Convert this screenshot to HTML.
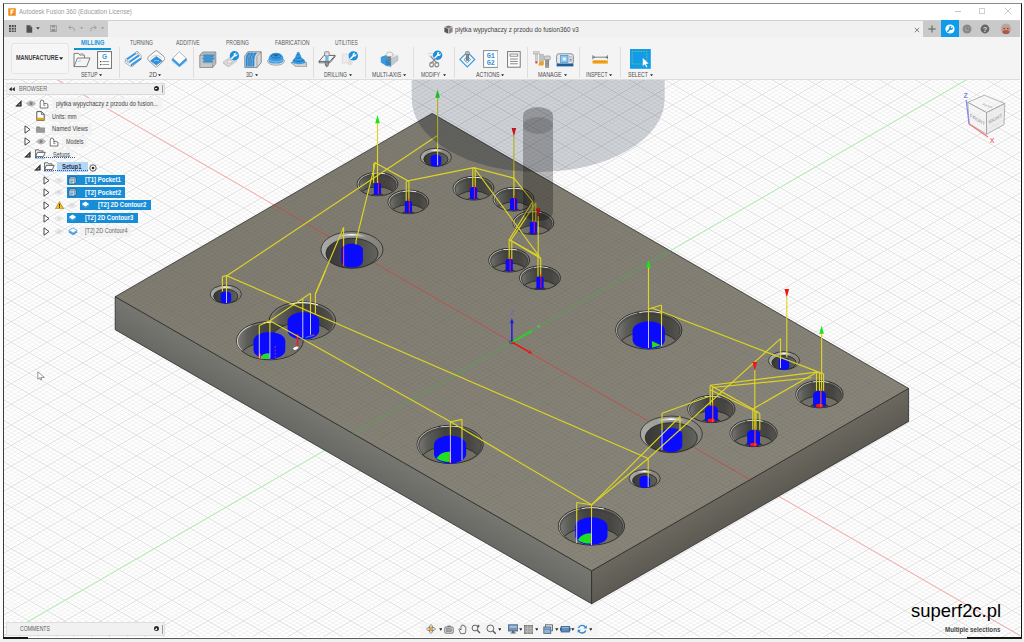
<!DOCTYPE html>
<html><head><meta charset="utf-8"><title>Autodesk Fusion 360</title>
<style>
*{box-sizing:border-box;margin:0;padding:0}
html,body{width:1024px;height:642px;overflow:hidden;background:#fbfbfb;font-family:"Liberation Sans",sans-serif;}
#shadow{position:absolute;left:0;top:639px;width:1024px;height:3px;background:#f0f0f0}
#win{position:absolute;left:3px;top:3px;width:1019px;height:636px;background:#fff;border:1px solid #3a3a3a;border-top-color:#8a8a8a;border-left-color:#3c3c3c;border-right:1.5px solid #141414;border-bottom:1.6px solid #5a5a5a}
#cv{position:absolute;left:0;top:0}
.abs{position:absolute}
#title{position:absolute;left:4px;top:4px;width:1016px;height:16px;background:#fff}
#title .t{position:absolute;left:14.5px;top:3.2px;font-size:8.3px;color:#8d8d8d;white-space:nowrap;letter-spacing:-.05px}
#qat{position:absolute;left:4px;top:20px;width:1016px;height:17px;background:#f1f1f1;border-top:1px solid #cfcfcf}
#qatl{position:absolute;left:0;top:0;width:104px;height:16px;background:#cdcdcd}
#qatr{position:absolute;left:919px;top:0;width:97px;height:16px;background:#c9c9c9}
#ribbon{position:absolute;left:4px;top:37px;width:1016px;height:43px;background:#f4f4f4;border-bottom:1px solid #dcdcdc}
.tab{position:absolute;top:39.3px;font-size:6.4px;color:#555;white-space:nowrap;letter-spacing:-.1px}
.lab{position:absolute;top:71.6px;font-size:6.1px;color:#4a4a4a;white-space:nowrap;transform:translateX(-50%);letter-spacing:-.1px}
.lab i{font-style:normal;font-size:4.6px;position:relative;top:-.6px;margin-left:1.6px;color:#333}
.sep{position:absolute;top:47px;width:1px;height:31px;background:#dedede}
.row{position:absolute;height:11px;font-size:6.2px;color:#3c3c3c;white-space:nowrap;line-height:11px}
.lbl{position:absolute;height:11px;line-height:11px;background:rgba(240,240,240,.92);padding:0 3px}
.sel{position:absolute;height:11px;line-height:11px;background:#1689d3;color:#fff;font-weight:bold}
.tri{position:absolute;width:0;height:0}
</style></head><body>
<div id="shadow"></div>
<div id="win"></div><div class="abs" style="left:3px;top:637.4px;width:25px;height:1.6px;background:#161616"></div><div class="abs" style="left:967px;top:637.4px;width:54.5px;height:1.6px;background:#161616"></div>
<svg id="cv" width="1024" height="642" viewBox="0 0 1024 642">
<defs>
<clipPath id="vp"><rect x="4" y="80" width="1016.5" height="557"/></clipPath>
<linearGradient id="gCh" x1="0" y1="0" x2="1" y2="1"><stop offset="0" stop-color="#c9c9c7"/><stop offset=".38" stop-color="#f2f2f0"/><stop offset=".62" stop-color="#9a9994"/><stop offset="1" stop-color="#7d7b72"/></linearGradient>
<linearGradient id="gWall" x1="0" y1="0" x2="1" y2="0"><stop offset="0" stop-color="#787874"/><stop offset=".14" stop-color="#5c5c58"/><stop offset=".42" stop-color="#42423f"/><stop offset=".8" stop-color="#464542"/><stop offset="1" stop-color="#565551"/></linearGradient>
<linearGradient id="gCs" x1="0" y1="0" x2="1" y2="0"><stop offset="0" stop-color="#aaaaa7"/><stop offset=".3" stop-color="#9c9c98"/><stop offset=".7" stop-color="#8b8a84"/><stop offset="1" stop-color="#838178"/></linearGradient>
<linearGradient id="gHi" x1="0" y1="0" x2="1" y2="0"><stop offset=".15" stop-color="#fff" stop-opacity="0"/><stop offset=".5" stop-color="#fff" stop-opacity="1"/><stop offset=".85" stop-color="#fff" stop-opacity="0"/></linearGradient>
<linearGradient id="gBore" x1="0" y1="0" x2="1" y2="0"><stop offset="0" stop-color="#383836"/><stop offset=".45" stop-color="#464644"/><stop offset=".8" stop-color="#585855"/><stop offset="1" stop-color="#62625f"/></linearGradient>
<linearGradient id="gTop" gradientUnits="userSpaceOnUse" x1="432" y1="113" x2="592" y2="571"><stop offset="0" stop-color="#7f7c71"/><stop offset="1" stop-color="#8a867b"/></linearGradient><linearGradient id="gLf" gradientUnits="userSpaceOnUse" x1="115.2" y1="296.7" x2="100.9" y2="321.5"><stop offset="0" stop-color="#777772"/><stop offset="1" stop-color="#686864"/></linearGradient><linearGradient id="gRt" gradientUnits="userSpaceOnUse" x1="591.6" y1="570.8" x2="605.9" y2="595.6"><stop offset="0" stop-color="#6b685f"/><stop offset="1" stop-color="#5c5a52"/></linearGradient>
<clipPath id="topc"><polygon points="432.2,113.4 115.2,296.7 591.6,570.8 908.6,388.4"/></clipPath>
</defs>
<g clip-path="url(#vp)">
<rect x="0" y="78" width="1024" height="564" fill="#fff"/>
<defs><path id="gmin" d="M-968.4 78L5 640M-961.3 78L12.1 640M-954.1 78L19.3 640M-939.8 78L33.6 640M-932.7 78L40.7 640M-925.5 78L47.9 640M-918.4 78L55 640M-904.1 78L69.3 640M11.5 78L-961.9 640M-896.9 78L76.5 640M18.6 78L-954.8 640M-889.8 78L83.6 640M25.8 78L-947.6 640M-882.6 78L90.8 640M32.9 78L-940.5 640M-868.3 78L105.1 640M47.2 78L-926.2 640M-861.2 78L112.2 640M54.4 78L-919 640M-854 78L119.4 640M61.5 78L-911.9 640M-846.9 78L126.5 640M68.7 78L-904.7 640M-832.6 78L140.8 640M83 78L-890.4 640M-825.4 78L148 640M90.1 78L-883.3 640M-818.3 78L155.1 640M97.3 78L-876.1 640M-811.1 78L162.3 640M104.4 78L-869 640M-796.8 78L176.6 640M118.7 78L-854.7 640M-789.7 78L183.7 640M125.9 78L-847.5 640M-782.5 78L190.9 640M133 78L-840.4 640M-775.4 78L198 640M140.2 78L-833.2 640M-761.1 78L212.3 640M154.5 78L-818.9 640M-753.9 78L219.5 640M161.6 78L-811.8 640M-746.8 78L226.6 640M168.8 78L-804.6 640M-739.6 78L233.8 640M175.9 78L-797.5 640M-725.3 78L248.1 640M190.2 78L-783.2 640M-718.2 78L255.2 640M197.4 78L-776 640M-711 78L262.4 640M204.5 78L-768.9 640M-703.9 78L269.5 640M211.7 78L-761.7 640M-689.6 78L283.8 640M226 78L-747.4 640M-682.4 78L291 640M233.1 78L-740.3 640M-675.3 78L298.1 640M240.3 78L-733.1 640M-668.1 78L305.3 640M247.4 78L-726 640M-653.8 78L319.6 640M261.7 78L-711.7 640M-646.7 78L326.7 640M268.9 78L-704.5 640M-639.5 78L333.9 640M276 78L-697.4 640M-632.4 78L341 640M283.2 78L-690.2 640M-618.1 78L355.3 640M297.5 78L-675.9 640M-610.9 78L362.5 640M304.6 78L-668.8 640M-603.8 78L369.6 640M311.8 78L-661.6 640M-596.6 78L376.8 640M318.9 78L-654.5 640M-582.3 78L391.1 640M333.2 78L-640.2 640M-575.2 78L398.2 640M340.4 78L-633 640M-568 78L405.4 640M347.5 78L-625.9 640M-560.9 78L412.5 640M354.7 78L-618.7 640M-546.6 78L426.8 640M369 78L-604.4 640M-539.4 78L434 640M376.1 78L-597.3 640M-532.3 78L441.1 640M383.3 78L-590.1 640M-525.1 78L448.3 640M390.4 78L-583 640M-510.8 78L462.6 640M404.7 78L-568.7 640M-503.7 78L469.7 640M411.9 78L-561.5 640M-496.5 78L476.9 640M419 78L-554.4 640M-489.4 78L484 640M426.2 78L-547.2 640M-475.1 78L498.3 640M440.5 78L-532.9 640M-467.9 78L505.5 640M447.6 78L-525.8 640M-460.8 78L512.6 640M454.8 78L-518.6 640M-453.6 78L519.8 640M461.9 78L-511.5 640M-439.3 78L534.1 640M476.2 78L-497.2 640M-432.2 78L541.2 640M483.4 78L-490 640M-425 78L548.4 640M490.5 78L-482.9 640M-417.9 78L555.5 640M497.7 78L-475.7 640M-403.6 78L569.8 640M512 78L-461.4 640M-396.4 78L577 640M519.1 78L-454.3 640M-389.3 78L584.1 640M526.3 78L-447.1 640M-382.1 78L591.3 640M533.4 78L-440 640M-367.8 78L605.6 640M547.7 78L-425.7 640M-360.7 78L612.7 640M554.9 78L-418.5 640M-353.5 78L619.9 640M562 78L-411.4 640M-346.4 78L627 640M569.2 78L-404.2 640M-332.1 78L641.3 640M583.5 78L-389.9 640M-324.9 78L648.5 640M590.6 78L-382.8 640M-317.8 78L655.6 640M597.8 78L-375.6 640M-310.6 78L662.8 640M604.9 78L-368.5 640M-296.3 78L677.1 640M619.2 78L-354.2 640M-289.2 78L684.2 640M626.4 78L-347 640M-282 78L691.4 640M633.5 78L-339.9 640M-274.9 78L698.5 640M640.7 78L-332.7 640M-260.6 78L712.8 640M655 78L-318.4 640M-253.4 78L720 640M662.1 78L-311.3 640M-246.3 78L727.1 640M669.3 78L-304.1 640M-239.1 78L734.3 640M676.4 78L-297 640M-224.8 78L748.6 640M690.7 78L-282.7 640M-217.7 78L755.7 640M697.9 78L-275.5 640M-210.5 78L762.9 640M705 78L-268.4 640M-203.4 78L770 640M712.2 78L-261.2 640M-189.1 78L784.3 640M726.5 78L-246.9 640M-181.9 78L791.5 640M733.6 78L-239.8 640M-174.8 78L798.6 640M740.8 78L-232.6 640M-167.6 78L805.8 640M747.9 78L-225.5 640M-153.3 78L820.1 640M762.2 78L-211.2 640M-146.2 78L827.2 640M769.4 78L-204 640M-139 78L834.4 640M776.5 78L-196.9 640M-131.9 78L841.5 640M783.7 78L-189.7 640M-117.6 78L855.8 640M798 78L-175.4 640M-110.4 78L863 640M805.1 78L-168.3 640M-103.3 78L870.1 640M812.3 78L-161.1 640M-96.1 78L877.3 640M819.4 78L-154 640M-81.8 78L891.6 640M833.7 78L-139.7 640M-74.7 78L898.7 640M840.9 78L-132.5 640M-67.5 78L905.9 640M848 78L-125.4 640M-60.4 78L913 640M855.2 78L-118.2 640M-46.1 78L927.3 640M869.5 78L-103.9 640M-38.9 78L934.5 640M876.6 78L-96.8 640M-31.8 78L941.6 640M883.8 78L-89.6 640M-24.6 78L948.8 640M890.9 78L-82.5 640M-10.3 78L963.1 640M905.2 78L-68.2 640M-3.2 78L970.2 640M912.4 78L-61 640M4 78L977.4 640M919.5 78L-53.9 640M11.1 78L984.5 640M926.7 78L-46.7 640M25.4 78L998.8 640M941 78L-32.4 640M32.6 78L1006 640M948.1 78L-25.3 640M39.7 78L1013.1 640M955.3 78L-18.1 640M46.9 78L1020.3 640M962.4 78L-11 640M61.2 78L1034.6 640M976.7 78L3.3 640M68.3 78L1041.7 640M983.9 78L10.5 640M75.5 78L1048.9 640M991 78L17.6 640M82.6 78L1056 640M998.2 78L24.8 640M96.9 78L1070.3 640M1012.5 78L39.1 640M104.1 78L1077.5 640M1019.6 78L46.2 640M111.2 78L1084.6 640M1026.8 78L53.4 640M118.4 78L1091.8 640M1033.9 78L60.5 640M132.7 78L1106.1 640M1048.2 78L74.8 640M139.8 78L1113.2 640M1055.4 78L82 640M147 78L1120.4 640M1062.5 78L89.1 640M154.1 78L1127.5 640M1069.7 78L96.3 640M168.4 78L1141.8 640M1084 78L110.6 640M175.6 78L1149 640M1091.1 78L117.7 640M182.7 78L1156.1 640M1098.3 78L124.9 640M189.9 78L1163.3 640M1105.4 78L132 640M204.2 78L1177.6 640M1119.7 78L146.3 640M211.3 78L1184.7 640M1126.9 78L153.5 640M218.5 78L1191.9 640M1134 78L160.6 640M225.6 78L1199 640M1141.2 78L167.8 640M239.9 78L1213.3 640M1155.5 78L182.1 640M247.1 78L1220.5 640M1162.6 78L189.2 640M254.2 78L1227.6 640M1169.8 78L196.4 640M261.4 78L1234.8 640M1176.9 78L203.5 640M275.7 78L1249.1 640M1191.2 78L217.8 640M282.8 78L1256.2 640M1198.4 78L225 640M290 78L1263.4 640M1205.5 78L232.1 640M297.1 78L1270.5 640M1212.7 78L239.3 640M311.4 78L1284.8 640M1227 78L253.6 640M318.6 78L1292 640M1234.1 78L260.7 640M325.7 78L1299.1 640M1241.3 78L267.9 640M332.9 78L1306.3 640M1248.4 78L275 640M347.2 78L1320.6 640M1262.7 78L289.3 640M354.3 78L1327.7 640M1269.9 78L296.5 640M361.5 78L1334.9 640M1277 78L303.6 640M368.6 78L1342 640M1284.2 78L310.8 640M382.9 78L1356.3 640M1298.5 78L325.1 640M390.1 78L1363.5 640M1305.6 78L332.2 640M397.2 78L1370.6 640M1312.8 78L339.4 640M404.4 78L1377.8 640M1319.9 78L346.5 640M418.7 78L1392.1 640M1334.2 78L360.8 640M425.8 78L1399.2 640M1341.4 78L368 640M433 78L1406.4 640M1348.5 78L375.1 640M440.1 78L1413.5 640M1355.7 78L382.3 640M454.4 78L1427.8 640M1370 78L396.6 640M461.6 78L1435 640M1377.1 78L403.7 640M468.7 78L1442.1 640M1384.3 78L410.9 640M475.9 78L1449.3 640M1391.4 78L418 640M490.2 78L1463.6 640M1405.7 78L432.3 640M497.3 78L1470.7 640M1412.9 78L439.5 640M504.5 78L1477.9 640M1420 78L446.6 640M511.6 78L1485 640M1427.2 78L453.8 640M525.9 78L1499.3 640M1441.5 78L468.1 640M533.1 78L1506.5 640M1448.6 78L475.2 640M540.2 78L1513.6 640M1455.8 78L482.4 640M547.4 78L1520.8 640M1462.9 78L489.5 640M561.7 78L1535.1 640M1477.2 78L503.8 640M568.8 78L1542.2 640M1484.4 78L511 640M576 78L1549.4 640M1491.5 78L518.1 640M583.1 78L1556.5 640M1498.7 78L525.3 640M597.4 78L1570.8 640M1513 78L539.6 640M604.6 78L1578 640M1520.1 78L546.7 640M611.7 78L1585.1 640M1527.3 78L553.9 640M618.9 78L1592.3 640M1534.4 78L561 640M633.2 78L1606.6 640M1548.7 78L575.3 640M640.3 78L1613.7 640M1555.9 78L582.5 640M647.5 78L1620.9 640M1563 78L589.6 640M654.6 78L1628 640M1570.2 78L596.8 640M668.9 78L1642.3 640M1584.5 78L611.1 640M676.1 78L1649.5 640M1591.6 78L618.2 640M683.2 78L1656.6 640M1598.8 78L625.4 640M690.4 78L1663.8 640M1605.9 78L632.5 640M704.7 78L1678.1 640M1620.2 78L646.8 640M711.8 78L1685.2 640M1627.4 78L654 640M719 78L1692.4 640M1634.5 78L661.1 640M726.1 78L1699.5 640M1641.7 78L668.3 640M740.4 78L1713.8 640M1656 78L682.6 640M747.6 78L1721 640M1663.1 78L689.7 640M754.7 78L1728.1 640M1670.3 78L696.9 640M761.9 78L1735.3 640M1677.4 78L704 640M776.2 78L1749.6 640M1691.7 78L718.3 640M783.3 78L1756.7 640M1698.9 78L725.5 640M790.5 78L1763.9 640M1706 78L732.6 640M797.6 78L1771 640M1713.2 78L739.8 640M811.9 78L1785.3 640M1727.5 78L754.1 640M819.1 78L1792.5 640M1734.6 78L761.2 640M826.2 78L1799.6 640M1741.8 78L768.4 640M833.4 78L1806.8 640M1748.9 78L775.5 640M847.7 78L1821.1 640M1763.2 78L789.8 640M854.8 78L1828.2 640M1770.4 78L797 640M862 78L1835.4 640M1777.5 78L804.1 640M869.1 78L1842.5 640M1784.7 78L811.3 640M883.4 78L1856.8 640M1799 78L825.6 640M890.6 78L1864 640M1806.1 78L832.7 640M897.7 78L1871.1 640M1813.3 78L839.9 640M904.9 78L1878.3 640M1820.4 78L847 640M919.2 78L1892.6 640M1834.7 78L861.3 640M926.3 78L1899.7 640M1841.9 78L868.5 640M933.5 78L1906.9 640M1849 78L875.6 640M940.6 78L1914 640M1856.2 78L882.8 640M954.9 78L1928.3 640M1870.5 78L897.1 640M962.1 78L1935.5 640M1877.6 78L904.2 640M969.2 78L1942.6 640M1884.8 78L911.4 640M976.4 78L1949.8 640M1891.9 78L918.5 640M990.7 78L1964.1 640M1906.2 78L932.8 640M997.8 78L1971.2 640M1913.4 78L940 640M1005 78L1978.4 640M1920.5 78L947.1 640M1012.1 78L1985.5 640M1927.7 78L954.3 640M1942 78L968.6 640M1949.1 78L975.7 640M1956.3 78L982.9 640M1963.4 78L990 640M1977.7 78L1004.3 640M1984.9 78L1011.5 640M1992 78L1018.6 640"/><path id="gmaj" d="M-947 78L26.4 640M-911.2 78L62.2 640M4.3 78L-969.1 640M-875.5 78L97.9 640M40.1 78L-933.3 640M-839.7 78L133.7 640M75.8 78L-897.6 640M-804 78L169.4 640M111.6 78L-861.8 640M-768.2 78L205.2 640M147.3 78L-826.1 640M-732.5 78L240.9 640M183.1 78L-790.3 640M-696.7 78L276.7 640M218.8 78L-754.6 640M-661 78L312.4 640M254.6 78L-718.8 640M-625.2 78L348.2 640M290.3 78L-683.1 640M-589.5 78L383.9 640M326.1 78L-647.3 640M-553.7 78L419.7 640M361.8 78L-611.6 640M-518 78L455.4 640M397.6 78L-575.8 640M-482.2 78L491.2 640M433.3 78L-540.1 640M-446.5 78L526.9 640M469.1 78L-504.3 640M-410.7 78L562.7 640M504.8 78L-468.6 640M-375 78L598.4 640M540.6 78L-432.8 640M-339.2 78L634.2 640M576.3 78L-397.1 640M-303.5 78L669.9 640M612.1 78L-361.3 640M-267.7 78L705.7 640M647.8 78L-325.6 640M-232 78L741.4 640M683.6 78L-289.8 640M-196.2 78L777.2 640M719.3 78L-254.1 640M-160.5 78L812.9 640M755.1 78L-218.3 640M-124.7 78L848.7 640M790.8 78L-182.6 640M-89 78L884.4 640M826.6 78L-146.8 640M-53.2 78L920.2 640M862.3 78L-111.1 640M-17.5 78L955.9 640M898.1 78L-75.3 640M18.3 78L991.7 640M933.8 78L-39.6 640M54 78L1027.4 640M969.6 78L-3.8 640M89.8 78L1063.2 640M1005.3 78L31.9 640M125.5 78L1098.9 640M1041.1 78L67.7 640M161.3 78L1134.7 640M1076.8 78L103.4 640M197 78L1170.4 640M1112.6 78L139.2 640M232.8 78L1206.2 640M1148.3 78L174.9 640M268.5 78L1241.9 640M1184.1 78L210.7 640M304.3 78L1277.7 640M1219.8 78L246.4 640M340 78L1313.4 640M1255.6 78L282.2 640M375.8 78L1349.2 640M1291.3 78L317.9 640M411.5 78L1384.9 640M1327.1 78L353.7 640M447.3 78L1420.7 640M1362.8 78L389.4 640M483 78L1456.4 640M1398.6 78L425.2 640M518.8 78L1492.2 640M1434.3 78L460.9 640M554.5 78L1527.9 640M1470.1 78L496.7 640M590.3 78L1563.7 640M1505.8 78L532.4 640M626 78L1599.4 640M1541.6 78L568.2 640M661.8 78L1635.2 640M1577.3 78L603.9 640M697.5 78L1670.9 640M1613.1 78L639.7 640M733.3 78L1706.7 640M1648.8 78L675.4 640M769 78L1742.4 640M1684.6 78L711.2 640M804.8 78L1778.2 640M1720.3 78L746.9 640M840.5 78L1813.9 640M1756.1 78L782.7 640M876.3 78L1849.7 640M1791.8 78L818.4 640M912 78L1885.4 640M1827.6 78L854.2 640M947.8 78L1921.2 640M1863.3 78L889.9 640M983.5 78L1956.9 640M1899.1 78L925.7 640M1019.3 78L1992.7 640M1934.8 78L961.4 640M1970.6 78L997.2 640"/></defs>
<use href="#gmin" fill="none" stroke="#e9e9e9" stroke-width="0.6"/><use href="#gmaj" fill="none" stroke="#d8d8d8" stroke-width="0.8"/>
<line x1="-50" y1="17.8" x2="1100" y2="681.7" stroke="#f5b4b4" stroke-width="1.1" opacity="1"/>
<line x1="-50" y1="666.6" x2="1100" y2="2.7" stroke="#b6eeb6" stroke-width="1.1" opacity="1"/>
<polygon points="115.2,296.7 591.6,570.8 591.6,603.8 115.2,329.7" fill="url(#gLf)" stroke="#2b2b29" stroke-width="0.8" stroke-linejoin="round"/>
<polygon points="591.6,570.8 908.6,388.4 908.6,421.4 591.6,603.8" fill="url(#gRt)" stroke="#2b2b29" stroke-width="0.8" stroke-linejoin="round"/>
<polygon points="432.2,113.4 115.2,296.7 591.6,570.8 908.6,388.4" fill="url(#gTop)" stroke="#2b2b29" stroke-width="0.8" stroke-linejoin="round"/>
<g clip-path="url(#topc)"><use href="#gmin" fill="none" stroke="#74716a" stroke-width=".5" opacity=".4"/><use href="#gmaj" fill="none" stroke="#6c695f" stroke-width=".7" opacity=".32"/>
<line x1="-50" y1="17.8" x2="1100" y2="681.7" stroke="#c0504a" stroke-width="1.25" opacity="0.6"/>
<line x1="-50" y1="666.6" x2="1100" y2="2.7" stroke="#58a058" stroke-width="1.25" opacity="0.7"/>
</g>
<ellipse cx="435.9" cy="157.3" rx="15.6" ry="9" fill="url(#gCs)" stroke="#2a2a28" stroke-width="0.8"/><path d="M426.1 152.4A13.8 8 0 0 1 445.7 152.4" fill="none" stroke="url(#gHi)" stroke-width="1.6"/><ellipse cx="435.9" cy="159.3" rx="12.1" ry="7" fill="url(#gBore)" stroke="#242422" stroke-width="0.8"/><path d="M430.6 157.6A5.2 3 0 0 1 441.1 157.6L441.1 163.5A5.2 3 0 0 1 430.6 163.5Z" fill="#0a0aff"/><ellipse cx="225.8" cy="294.2" rx="15.6" ry="9" fill="url(#gCs)" stroke="#2a2a28" stroke-width="0.8"/><path d="M216 289.3A13.8 8 0 0 1 235.6 289.3" fill="none" stroke="url(#gHi)" stroke-width="1.6"/><ellipse cx="225.8" cy="296.2" rx="12.1" ry="7" fill="url(#gBore)" stroke="#242422" stroke-width="0.8"/><path d="M220.6 294.5A5.2 3 0 0 1 231.1 294.5L231.1 300.4A5.2 3 0 0 1 220.6 300.4Z" fill="#0a0aff"/><ellipse cx="644.7" cy="478.6" rx="15.6" ry="9" fill="url(#gCs)" stroke="#2a2a28" stroke-width="0.8"/><path d="M634.9 473.7A13.8 8 0 0 1 654.5 473.7" fill="none" stroke="url(#gHi)" stroke-width="1.6"/><ellipse cx="644.7" cy="480.6" rx="12.1" ry="7" fill="url(#gBore)" stroke="#242422" stroke-width="0.8"/><path d="M639.5 478.9A5.2 3 0 0 1 650 478.9L650 484.8A5.2 3 0 0 1 639.5 484.8Z" fill="#0a0aff"/><ellipse cx="784" cy="360.6" rx="15.6" ry="9" fill="url(#gCs)" stroke="#2a2a28" stroke-width="0.8"/><path d="M774.2 355.7A13.8 8 0 0 1 793.8 355.7" fill="none" stroke="url(#gHi)" stroke-width="1.6"/><ellipse cx="784" cy="362.6" rx="12.1" ry="7" fill="url(#gBore)" stroke="#242422" stroke-width="0.8"/><path d="M778.8 360.9A5.2 3 0 0 1 789.2 360.9L789.2 366.8A5.2 3 0 0 1 778.8 366.8Z" fill="#0a0aff"/><ellipse cx="377.5" cy="184" rx="20.4" ry="11.8" fill="#7d7b73" stroke="#262624" stroke-width="0.9"/><path d="M372.1 173.7A19.5 11.1 0 0 1 384.8 174" fill="none" stroke="#f0f0ee" stroke-width="1.2" stroke-linecap="round"/><path d="M360.6 189.8A19.5 11.1 0 0 1 370.2 174" fill="none" stroke="#b4b4b0" stroke-width="1"/><clipPath id="c1"><ellipse cx="377.5" cy="184.6" rx="18.7" ry="10.8" /></clipPath><ellipse cx="377.5" cy="184.6" rx="18.7" ry="10.8" fill="url(#gWall)" stroke="#2e2e2c" stroke-width="0.6"/><g clip-path="url(#c1)"><ellipse cx="377.5" cy="186.2" rx="18.7" ry="10.8" fill="none" stroke="#3a3936" stroke-width="0.5" opacity=".7"/><ellipse cx="377.5" cy="197.6" rx="18.7" ry="10.8" fill="#726f67" stroke="#262624" stroke-width="0.8"/><ellipse cx="377.5" cy="197.6" rx="7.3" ry="4.2" fill="#3a3a38" stroke="#222" stroke-width="0.6"/></g><path d="M373.9 184.9A3.6 2.1 0 0 1 381.1 184.9L381.1 193.1A3.6 2.1 0 0 1 373.9 193.1Z" fill="#0a0aff"/><ellipse cx="408.4" cy="201.9" rx="20.4" ry="11.8" fill="#7d7b73" stroke="#262624" stroke-width="0.9"/><path d="M403 191.6A19.5 11.1 0 0 1 415.7 191.9" fill="none" stroke="#f0f0ee" stroke-width="1.2" stroke-linecap="round"/><path d="M391.5 207.7A19.5 11.1 0 0 1 401.1 191.9" fill="none" stroke="#b4b4b0" stroke-width="1"/><clipPath id="c2"><ellipse cx="408.4" cy="202.5" rx="18.7" ry="10.8" /></clipPath><ellipse cx="408.4" cy="202.5" rx="18.7" ry="10.8" fill="url(#gWall)" stroke="#2e2e2c" stroke-width="0.6"/><g clip-path="url(#c2)"><ellipse cx="408.4" cy="204.1" rx="18.7" ry="10.8" fill="none" stroke="#3a3936" stroke-width="0.5" opacity=".7"/><ellipse cx="408.4" cy="215.5" rx="18.7" ry="10.8" fill="#726f67" stroke="#262624" stroke-width="0.8"/><ellipse cx="408.4" cy="215.5" rx="7.3" ry="4.2" fill="#3a3a38" stroke="#222" stroke-width="0.6"/></g><path d="M404.8 202.8A3.6 2.1 0 0 1 412 202.8L412 211A3.6 2.1 0 0 1 404.8 211Z" fill="#0a0aff"/><ellipse cx="473.5" cy="188.2" rx="20.4" ry="11.8" fill="#7d7b73" stroke="#262624" stroke-width="0.9"/><path d="M468.1 177.9A19.5 11.1 0 0 1 480.8 178.2" fill="none" stroke="#f0f0ee" stroke-width="1.2" stroke-linecap="round"/><path d="M456.6 194A19.5 11.1 0 0 1 466.2 178.2" fill="none" stroke="#b4b4b0" stroke-width="1"/><clipPath id="c3"><ellipse cx="473.5" cy="188.8" rx="18.7" ry="10.8" /></clipPath><ellipse cx="473.5" cy="188.8" rx="18.7" ry="10.8" fill="url(#gWall)" stroke="#2e2e2c" stroke-width="0.6"/><g clip-path="url(#c3)"><ellipse cx="473.5" cy="190.4" rx="18.7" ry="10.8" fill="none" stroke="#3a3936" stroke-width="0.5" opacity=".7"/><ellipse cx="473.5" cy="201.8" rx="18.7" ry="10.8" fill="#726f67" stroke="#262624" stroke-width="0.8"/><ellipse cx="473.5" cy="201.8" rx="7.3" ry="4.2" fill="#3a3a38" stroke="#222" stroke-width="0.6"/></g><path d="M469.9 189.1A3.6 2.1 0 0 1 477.1 189.1L477.1 197.3A3.6 2.1 0 0 1 469.9 197.3Z" fill="#0a0aff"/><ellipse cx="513.6" cy="199.2" rx="20.4" ry="11.8" fill="#7d7b73" stroke="#262624" stroke-width="0.9"/><path d="M508.2 188.9A19.5 11.1 0 0 1 520.9 189.2" fill="none" stroke="#f0f0ee" stroke-width="1.2" stroke-linecap="round"/><path d="M496.7 205A19.5 11.1 0 0 1 506.3 189.2" fill="none" stroke="#b4b4b0" stroke-width="1"/><clipPath id="c4"><ellipse cx="513.6" cy="199.8" rx="18.7" ry="10.8" /></clipPath><ellipse cx="513.6" cy="199.8" rx="18.7" ry="10.8" fill="url(#gWall)" stroke="#2e2e2c" stroke-width="0.6"/><g clip-path="url(#c4)"><ellipse cx="513.6" cy="201.4" rx="18.7" ry="10.8" fill="none" stroke="#3a3936" stroke-width="0.5" opacity=".7"/><ellipse cx="513.6" cy="212.8" rx="18.7" ry="10.8" fill="#726f67" stroke="#262624" stroke-width="0.8"/><ellipse cx="513.6" cy="212.8" rx="7.3" ry="4.2" fill="#3a3a38" stroke="#222" stroke-width="0.6"/></g><path d="M510 200.1A3.6 2.1 0 0 1 517.2 200.1L517.2 208.3A3.6 2.1 0 0 1 510 208.3Z" fill="#0a0aff"/><ellipse cx="533.4" cy="222.7" rx="20.4" ry="11.8" fill="#7d7b73" stroke="#262624" stroke-width="0.9"/><path d="M528 212.4A19.5 11.1 0 0 1 540.7 212.7" fill="none" stroke="#f0f0ee" stroke-width="1.2" stroke-linecap="round"/><path d="M516.5 228.5A19.5 11.1 0 0 1 526.1 212.7" fill="none" stroke="#b4b4b0" stroke-width="1"/><clipPath id="c5"><ellipse cx="533.4" cy="223.3" rx="18.7" ry="10.8" /></clipPath><ellipse cx="533.4" cy="223.3" rx="18.7" ry="10.8" fill="url(#gWall)" stroke="#2e2e2c" stroke-width="0.6"/><g clip-path="url(#c5)"><ellipse cx="533.4" cy="224.9" rx="18.7" ry="10.8" fill="none" stroke="#3a3936" stroke-width="0.5" opacity=".7"/><ellipse cx="533.4" cy="236.3" rx="18.7" ry="10.8" fill="#726f67" stroke="#262624" stroke-width="0.8"/><ellipse cx="533.4" cy="236.3" rx="7.3" ry="4.2" fill="#3a3a38" stroke="#222" stroke-width="0.6"/></g><path d="M529.8 223.6A3.6 2.1 0 0 1 537 223.6L537 231.8A3.6 2.1 0 0 1 529.8 231.8Z" fill="#0a0aff"/><ellipse cx="509.2" cy="260.2" rx="20.4" ry="11.8" fill="#7d7b73" stroke="#262624" stroke-width="0.9"/><path d="M503.8 249.9A19.5 11.1 0 0 1 516.5 250.2" fill="none" stroke="#f0f0ee" stroke-width="1.2" stroke-linecap="round"/><path d="M492.3 266A19.5 11.1 0 0 1 501.9 250.2" fill="none" stroke="#b4b4b0" stroke-width="1"/><clipPath id="c6"><ellipse cx="509.2" cy="260.8" rx="18.7" ry="10.8" /></clipPath><ellipse cx="509.2" cy="260.8" rx="18.7" ry="10.8" fill="url(#gWall)" stroke="#2e2e2c" stroke-width="0.6"/><g clip-path="url(#c6)"><ellipse cx="509.2" cy="262.4" rx="18.7" ry="10.8" fill="none" stroke="#3a3936" stroke-width="0.5" opacity=".7"/><ellipse cx="509.2" cy="273.8" rx="18.7" ry="10.8" fill="#726f67" stroke="#262624" stroke-width="0.8"/><ellipse cx="509.2" cy="273.8" rx="7.3" ry="4.2" fill="#3a3a38" stroke="#222" stroke-width="0.6"/></g><path d="M505.6 261.1A3.6 2.1 0 0 1 512.8 261.1L512.8 269.3A3.6 2.1 0 0 1 505.6 269.3Z" fill="#0a0aff"/><ellipse cx="540" cy="277.8" rx="20.4" ry="11.8" fill="#7d7b73" stroke="#262624" stroke-width="0.9"/><path d="M534.6 267.5A19.5 11.1 0 0 1 547.3 267.8" fill="none" stroke="#f0f0ee" stroke-width="1.2" stroke-linecap="round"/><path d="M523.1 283.6A19.5 11.1 0 0 1 532.7 267.8" fill="none" stroke="#b4b4b0" stroke-width="1"/><clipPath id="c7"><ellipse cx="540" cy="278.4" rx="18.7" ry="10.8" /></clipPath><ellipse cx="540" cy="278.4" rx="18.7" ry="10.8" fill="url(#gWall)" stroke="#2e2e2c" stroke-width="0.6"/><g clip-path="url(#c7)"><ellipse cx="540" cy="280" rx="18.7" ry="10.8" fill="none" stroke="#3a3936" stroke-width="0.5" opacity=".7"/><ellipse cx="540" cy="291.4" rx="18.7" ry="10.8" fill="#726f67" stroke="#262624" stroke-width="0.8"/><ellipse cx="540" cy="291.4" rx="7.3" ry="4.2" fill="#3a3a38" stroke="#222" stroke-width="0.6"/></g><path d="M536.4 278.7A3.6 2.1 0 0 1 543.6 278.7L543.6 286.9A3.6 2.1 0 0 1 536.4 286.9Z" fill="#0a0aff"/><ellipse cx="711.4" cy="409" rx="23.6" ry="13.6" fill="#7d7b73" stroke="#262624" stroke-width="0.9"/><path d="M705.1 396.9A22.7 12.9 0 0 1 719.9 397.3" fill="none" stroke="#f0f0ee" stroke-width="1.2" stroke-linecap="round"/><path d="M691.7 415.8A22.7 12.9 0 0 1 702.9 397.3" fill="none" stroke="#b4b4b0" stroke-width="1"/><clipPath id="c8"><ellipse cx="711.4" cy="409.6" rx="21.9" ry="12.6" /></clipPath><ellipse cx="711.4" cy="409.6" rx="21.9" ry="12.6" fill="url(#gWall)" stroke="#2e2e2c" stroke-width="0.6"/><g clip-path="url(#c8)"><ellipse cx="711.4" cy="411.2" rx="21.9" ry="12.6" fill="none" stroke="#3a3936" stroke-width="0.5" opacity=".7"/><ellipse cx="711.4" cy="423.6" rx="21.9" ry="12.6" fill="#726f67" stroke="#262624" stroke-width="0.8"/><ellipse cx="711.4" cy="423.6" rx="9.9" ry="5.7" fill="#3a3a38" stroke="#222" stroke-width="0.6"/></g><path d="M705 409.3A6.4 3.7 0 0 1 717.8 409.3L717.8 418.7A6.4 3.7 0 0 1 705 418.7Z" fill="#0a0aff"/><ellipse cx="711.4" cy="420.4" rx="3.8" ry="1.8" fill="#ee1515"/><ellipse cx="753.6" cy="433.1" rx="23.6" ry="13.6" fill="#7d7b73" stroke="#262624" stroke-width="0.9"/><path d="M747.3 421A22.7 12.9 0 0 1 762.1 421.4" fill="none" stroke="#f0f0ee" stroke-width="1.2" stroke-linecap="round"/><path d="M733.9 439.9A22.7 12.9 0 0 1 745.1 421.4" fill="none" stroke="#b4b4b0" stroke-width="1"/><clipPath id="c9"><ellipse cx="753.6" cy="433.7" rx="21.9" ry="12.6" /></clipPath><ellipse cx="753.6" cy="433.7" rx="21.9" ry="12.6" fill="url(#gWall)" stroke="#2e2e2c" stroke-width="0.6"/><g clip-path="url(#c9)"><ellipse cx="753.6" cy="435.3" rx="21.9" ry="12.6" fill="none" stroke="#3a3936" stroke-width="0.5" opacity=".7"/><ellipse cx="753.6" cy="447.7" rx="21.9" ry="12.6" fill="#726f67" stroke="#262624" stroke-width="0.8"/><ellipse cx="753.6" cy="447.7" rx="9.9" ry="5.7" fill="#3a3a38" stroke="#222" stroke-width="0.6"/></g><path d="M747.2 433.4A6.4 3.7 0 0 1 760 433.4L760 442.8A6.4 3.7 0 0 1 747.2 442.8Z" fill="#0a0aff"/><ellipse cx="753.6" cy="444.5" rx="3.8" ry="1.8" fill="#ee1515"/><ellipse cx="819.5" cy="394.2" rx="23.6" ry="13.6" fill="#7d7b73" stroke="#262624" stroke-width="0.9"/><path d="M813.2 382.1A22.7 12.9 0 0 1 828 382.5" fill="none" stroke="#f0f0ee" stroke-width="1.2" stroke-linecap="round"/><path d="M799.8 401A22.7 12.9 0 0 1 811 382.5" fill="none" stroke="#b4b4b0" stroke-width="1"/><clipPath id="c10"><ellipse cx="819.5" cy="394.8" rx="21.9" ry="12.6" /></clipPath><ellipse cx="819.5" cy="394.8" rx="21.9" ry="12.6" fill="url(#gWall)" stroke="#2e2e2c" stroke-width="0.6"/><g clip-path="url(#c10)"><ellipse cx="819.5" cy="396.4" rx="21.9" ry="12.6" fill="none" stroke="#3a3936" stroke-width="0.5" opacity=".7"/><ellipse cx="819.5" cy="408.8" rx="21.9" ry="12.6" fill="#726f67" stroke="#262624" stroke-width="0.8"/><ellipse cx="819.5" cy="408.8" rx="9.9" ry="5.7" fill="#3a3a38" stroke="#222" stroke-width="0.6"/></g><path d="M813.1 394.5A6.4 3.7 0 0 1 825.9 394.5L825.9 403.9A6.4 3.7 0 0 1 813.1 403.9Z" fill="#0a0aff"/><ellipse cx="819.5" cy="405.6" rx="3.8" ry="1.8" fill="#ee1515"/><ellipse cx="352" cy="249.6" rx="31" ry="17.9" fill="url(#gCs)" stroke="#2a2a28" stroke-width="0.8"/><path d="M331.8 239.6A28.5 16.5 0 0 1 372.2 239.6" fill="none" stroke="url(#gHi)" stroke-width="1.6"/><ellipse cx="352" cy="253.3" rx="26" ry="15" fill="url(#gBore)" stroke="#242422" stroke-width="0.8"/><path d="M341.1 249.9A10.9 6.3 0 0 1 362.9 249.9L362.9 261.3A10.9 6.3 0 0 1 341.1 261.3Z" fill="#0a0aff"/><ellipse cx="671.3" cy="434" rx="31" ry="17.9" fill="url(#gCs)" stroke="#2a2a28" stroke-width="0.8"/><path d="M651.1 424A28.5 16.5 0 0 1 691.5 424" fill="none" stroke="url(#gHi)" stroke-width="1.6"/><ellipse cx="671.3" cy="437.7" rx="26" ry="15" fill="url(#gBore)" stroke="#242422" stroke-width="0.8"/><path d="M660.4 434.3A10.9 6.3 0 0 1 682.2 434.3L682.2 445.7A10.9 6.3 0 0 1 660.4 445.7Z" fill="#0a0aff"/><ellipse cx="648.8" cy="330" rx="33.1" ry="19.1" fill="#7d7b73" stroke="#262624" stroke-width="0.9"/><path d="M639.9 312.6A32.2 18.4 0 0 1 660.8 313.2" fill="none" stroke="#f0f0ee" stroke-width="1.2" stroke-linecap="round"/><path d="M620.9 339.5A32.2 18.4 0 0 1 636.7 313.2" fill="none" stroke="#b4b4b0" stroke-width="1"/><clipPath id="c11"><ellipse cx="648.8" cy="330.6" rx="31.4" ry="18.1" /></clipPath><ellipse cx="648.8" cy="330.6" rx="31.4" ry="18.1" fill="url(#gWall)" stroke="#2e2e2c" stroke-width="0.6"/><g clip-path="url(#c11)"><ellipse cx="648.8" cy="332.2" rx="31.4" ry="18.1" fill="none" stroke="#3a3936" stroke-width="0.5" opacity=".7"/><ellipse cx="648.8" cy="349.6" rx="31.4" ry="18.1" fill="#726f67" stroke="#262624" stroke-width="0.8"/></g><path d="M632.6 330.5A16.1 9.3 0 0 1 664.9 330.5L664.9 339.7A16.1 9.3 0 0 1 632.6 339.7Z" fill="#0a0aff"/><path d="M651.8 340.9l9 4.3l-8.6 2.6Z" fill="#1fe01f"/><ellipse cx="450.1" cy="444.4" rx="33.1" ry="19.1" fill="#7d7b73" stroke="#262624" stroke-width="0.9"/><path d="M441.2 427A32.2 18.4 0 0 1 462.2 427.6" fill="none" stroke="#f0f0ee" stroke-width="1.2" stroke-linecap="round"/><path d="M422.2 453.9A32.2 18.4 0 0 1 438 427.6" fill="none" stroke="#b4b4b0" stroke-width="1"/><clipPath id="c12"><ellipse cx="450.1" cy="445" rx="31.4" ry="18.1" /></clipPath><ellipse cx="450.1" cy="445" rx="31.4" ry="18.1" fill="url(#gWall)" stroke="#2e2e2c" stroke-width="0.6"/><g clip-path="url(#c12)"><ellipse cx="450.1" cy="446.6" rx="31.4" ry="18.1" fill="none" stroke="#3a3936" stroke-width="0.5" opacity=".7"/><ellipse cx="450.1" cy="464" rx="31.4" ry="18.1" fill="#726f67" stroke="#262624" stroke-width="0.8"/></g><path d="M434 444.9A16.1 9.3 0 0 1 466.2 444.9L466.2 454.1A16.1 9.3 0 0 1 434 454.1Z" fill="#0a0aff"/><path d="M436.4 458.3q4.8 -7.4 13.7 -6.5l0 10.2q-8.1 0.3 -13.7 -3.7Z" fill="#1fe01f"/><rect x="449.5" y="454" width="1.2" height="9.4" fill="#ff2a10"/><ellipse cx="591.4" cy="526" rx="33.1" ry="19.1" fill="#7d7b73" stroke="#262624" stroke-width="0.9"/><path d="M582.5 508.6A32.2 18.4 0 0 1 603.5 509.2" fill="none" stroke="#f0f0ee" stroke-width="1.2" stroke-linecap="round"/><path d="M563.5 535.5A32.2 18.4 0 0 1 579.3 509.2" fill="none" stroke="#b4b4b0" stroke-width="1"/><clipPath id="c13"><ellipse cx="591.4" cy="526.6" rx="31.4" ry="18.1" /></clipPath><ellipse cx="591.4" cy="526.6" rx="31.4" ry="18.1" fill="url(#gWall)" stroke="#2e2e2c" stroke-width="0.6"/><g clip-path="url(#c13)"><ellipse cx="591.4" cy="528.2" rx="31.4" ry="18.1" fill="none" stroke="#3a3936" stroke-width="0.5" opacity=".7"/><ellipse cx="591.4" cy="545.6" rx="31.4" ry="18.1" fill="#726f67" stroke="#262624" stroke-width="0.8"/></g><path d="M575.3 526.5A16.1 9.3 0 0 1 607.5 526.5L607.5 535.7A16.1 9.3 0 0 1 575.3 535.7Z" fill="#0a0aff"/><path d="M577.7 539.9q4.8 -7.4 13.7 -6.5l0 10.2q-8.1 0.3 -13.7 -3.7Z" fill="#1fe01f"/><rect x="590.8" y="535.6" width="1.2" height="9.4" fill="#ff2a10"/>
<ellipse cx="302.4" cy="321" rx="33.3" ry="19.2" fill="#7d7b73" stroke="#262624" stroke-width="0.9"/><ellipse cx="269.9" cy="340.6" rx="33.3" ry="19.2" fill="#7d7b73" stroke="#262624" stroke-width="0.9"/><path d="M290.3 304.1A32.4 18.5 0 0 1 317.6 304.9" fill="none" stroke="#f4f4f2" stroke-width="1.3" stroke-linecap="round"/><path d="M264.3 322.7A32.4 18.5 0 0 1 279.9 323.3" fill="none" stroke="#f4f4f2" stroke-width="1.3" stroke-linecap="round"/><path d="M241.8 350.2A32.4 18.5 0 0 1 251.3 325.7" fill="none" stroke="#c9c9c6" stroke-width="1.1"/><clipPath id="cf8"><ellipse cx="269.9" cy="341.2" rx="31.6" ry="18.2" /><ellipse cx="302.4" cy="321.6" rx="31.6" ry="18.2" /></clipPath><ellipse cx="302.4" cy="321.6" rx="31.6" ry="18.2" fill="url(#gWall)"/><ellipse cx="269.9" cy="341.2" rx="31.6" ry="18.2" fill="url(#gWall)"/><g clip-path="url(#cf8)"><ellipse cx="302.4" cy="340.6" rx="31.6" ry="18.2" fill="#726f67" stroke="#262624" stroke-width="0.8"/><ellipse cx="269.9" cy="360.2" rx="31.6" ry="18.2" fill="#726f67" stroke="#262624" stroke-width="0.8"/><ellipse cx="302.4" cy="340.6" rx="31" ry="17.7" fill="#726f67"/></g><path d="M287.6 321.1A15.8 9.1 0 0 1 319.2 321.1L319.2 330.5A15.8 9.1 0 0 1 287.6 330.5Z" fill="#0a0aff"/><path d="M253.5 341.1A15.9 9.2 0 0 1 285.3 341.1L285.3 350A15.9 9.2 0 0 1 253.5 350Z" fill="#0a0aff"/><rect x="296.7" y="334" width="1.7" height="13" fill="#e8202a"/><path d="M293 348.3q2.6 -2.6 5.6 -1.6q-0.6 3 -4.6 3.2z" fill="#fff"/><path d="M305.6 337.5l7.7 -2.1" stroke="#2a7cff" stroke-width="1.2"/><circle cx="313.6" cy="335.2" r="1" fill="#e03030"/><rect x="258.8" y="353.6" width="2" height="5.4" fill="#ff3010"/><path d="M261 356q4 -4 8.6 -2.4l0 5.4 -8.6 0z" fill="#25d83a"/><path d="M275.2 346v12" stroke="#c03a8a" stroke-width="1" stroke-dasharray="2 1.4" opacity=".8"/><circle cx="315.4" cy="314" r="1.1" fill="#e03030"/>
<g>
<ellipse cx="511.9" cy="342.2" rx="2.6" ry="1.6" fill="none" stroke="#4a4a44" stroke-width="0.8"/>
<line x1="511.9" y1="342.2" x2="511.9" y2="323.2" stroke="#1414f0" stroke-width="1.4"/>
<path d="M511.9 318.2l-1.8 5h3.6z" fill="#1414f0"/>
<line x1="511.9" y1="342.2" x2="528.9" y2="332.6" stroke="#10e810" stroke-width="1.5"/>
<path d="M532.9 330.3l-4.6 0.9 1.6 2.9z" fill="#10e810"/>
<line x1="511.9" y1="342.2" x2="527.9" y2="351.2" stroke="#f01010" stroke-width="1.5"/>
<path d="M532.4 353.8l-4.6 -0.9 1.6 -2.9z" fill="#f01010"/>
<text x="511.9" y="314.7" font-size="6.4" fill="#5a5ae0" fill-opacity=".8" font-family="Liberation Sans,sans-serif" text-anchor="middle">Z</text>
<circle cx="538.6" cy="326.3" r="1.3" fill="#4fcf4f" opacity=".8"/>
<circle cx="539" cy="357.6" r="1.3" fill="#e05050" opacity=".8"/>
</g>
<polyline points="437.6,135.5 226.5,276" fill="none" stroke="#ddd522" stroke-width="1.15"/><polyline points="222.4,276.6 226.5,275.6 648.2,458.5" fill="none" stroke="#ddd522" stroke-width="1.15"/><polyline points="375.3,162.8 408,180.8 473.8,167.6 513.9,178.1 532.7,201.5 509.2,239.8 539.2,256.3" fill="none" stroke="#ddd522" stroke-width="1.15"/><polyline points="373.6,163.6 375.3,162.8 356,241" fill="none" stroke="#ddd522" stroke-width="1.15"/><polyline points="343.6,227.4 315.4,294" fill="none" stroke="#ddd522" stroke-width="1.15"/><polyline points="310.5,293.3 269.9,320.7 259.3,325.6" fill="none" stroke="#ddd522" stroke-width="1.15"/><polyline points="269.9,320.7 451,422 591.5,504.8" fill="none" stroke="#ddd522" stroke-width="1.15"/><polyline points="450.4,422 462,419.4" fill="none" stroke="#ddd522" stroke-width="1.15"/><polyline points="576.7,502.5 591.5,504.8" fill="none" stroke="#ddd522" stroke-width="1.15"/><polyline points="591.5,504.8 648.2,458.5 780.5,338.6" fill="none" stroke="#ddd522" stroke-width="1.15"/><polyline points="591.5,504.8 680,416.5" fill="none" stroke="#ddd522" stroke-width="1.15"/><polyline points="475,169 539.2,256.3" fill="none" stroke="#ddd522" stroke-width="1.15"/><polyline points="535.8,203 510.6,240.6" fill="none" stroke="#ddd522" stroke-width="1.15"/><polyline points="509.2,239.8 511.8,241 540.7,258.5" fill="none" stroke="#ddd522" stroke-width="1.15"/><polyline points="648.5,309 651.9,308 661.5,305" fill="none" stroke="#ddd522" stroke-width="1.15"/><polyline points="651.9,308 822.6,373.6" fill="none" stroke="#ddd522" stroke-width="1.15"/><polyline points="662,413.3 710.2,396" fill="none" stroke="#ddd522" stroke-width="1.15"/><polyline points="710.2,385.2 752.8,409 815.5,373" fill="none" stroke="#ddd522" stroke-width="1.15"/><polyline points="710.2,389.8 759.8,413.5 756,411" fill="none" stroke="#ddd522" stroke-width="1.15"/><polyline points="710.2,385.2 816.5,372.2 823.6,373.7" fill="none" stroke="#ddd522" stroke-width="1.15"/><polyline points="712.5,387.5 811.5,377.7" fill="none" stroke="#ddd522" stroke-width="1.15"/><polyline points="406.2,181.4 408,180.8 408.9,181.4" fill="none" stroke="#ddd522" stroke-width="1.15"/><polyline points="472.8,168 475.2,168.2" fill="none" stroke="#ddd522" stroke-width="1.15"/><polyline points="538,256.3 540.7,258" fill="none" stroke="#ddd522" stroke-width="1.15"/><polyline points="437.6,97 437.6,154.6" fill="none" stroke="#ddd522" stroke-width="1.15"/><line x1="437.6" y1="154.6" x2="437.6" y2="165.5" stroke="#e9e4ee" stroke-width="1.0" opacity="0.85"/><polyline points="222.4,276.6 222.4,291.5" fill="none" stroke="#ddd522" stroke-width="1.15"/><polyline points="226.5,275.6 226.5,291.5" fill="none" stroke="#ddd522" stroke-width="1.15"/><line x1="226.5" y1="291.5" x2="226.5" y2="303" stroke="#e9e4ee" stroke-width="1.0" opacity="0.85"/><polyline points="648.2,458.5 648.2,475.9" fill="none" stroke="#ddd522" stroke-width="1.15"/><line x1="648.2" y1="475.9" x2="648.2" y2="487" stroke="#e9e4ee" stroke-width="1.0" opacity="0.85"/><polyline points="780.5,338.6 780.5,357.9" fill="none" stroke="#ddd522" stroke-width="1.15"/><line x1="780.5" y1="357.9" x2="780.5" y2="368" stroke="#e9e4ee" stroke-width="1.0" opacity="0.85"/><polyline points="786.8,297 786.8,357.4" fill="none" stroke="#ddd522" stroke-width="1.15"/><polyline points="373.6,163.6 373.6,183" fill="none" stroke="#ddd522" stroke-width="1.15"/><polyline points="377.5,123 377.5,183" fill="none" stroke="#ddd522" stroke-width="1.15"/><polyline points="406.2,181.4 406.2,200.7" fill="none" stroke="#ddd522" stroke-width="1.15"/><polyline points="408.9,181.4 408.9,200.7" fill="none" stroke="#ddd522" stroke-width="1.15"/><polyline points="472.8,168 472.8,187" fill="none" stroke="#ddd522" stroke-width="1.15"/><polyline points="475.2,168.2 475.2,187" fill="none" stroke="#ddd522" stroke-width="1.15"/><polyline points="513.9,136 513.9,198" fill="none" stroke="#ddd522" stroke-width="1.15"/><polyline points="532.7,201.5 532.7,221.5" fill="none" stroke="#ddd522" stroke-width="1.15"/><polyline points="535.8,203 535.8,221.5" fill="none" stroke="#ddd522" stroke-width="1.15"/><polyline points="538.2,216 538.2,256" fill="none" stroke="#ddd522" stroke-width="1.15"/><polyline points="509.2,239.8 509.2,259" fill="none" stroke="#ddd522" stroke-width="1.15"/><polyline points="511.8,241 511.8,259" fill="none" stroke="#ddd522" stroke-width="1.15"/><polyline points="538,256.3 538,276.6" fill="none" stroke="#ddd522" stroke-width="1.15"/><polyline points="540.7,258 540.7,276.6" fill="none" stroke="#ddd522" stroke-width="1.15"/><polyline points="710.2,385.2 710.2,405.6" fill="none" stroke="#ddd522" stroke-width="1.15"/><polyline points="712.5,387.5 712.5,405.6" fill="none" stroke="#ddd522" stroke-width="1.15"/><polyline points="752.8,409 752.8,429.7" fill="none" stroke="#ddd522" stroke-width="1.15"/><polyline points="756,411 756,429.7" fill="none" stroke="#ddd522" stroke-width="1.15"/><polyline points="759.8,413.5 759.8,429.7" fill="none" stroke="#ddd522" stroke-width="1.15"/><polyline points="754.8,370 754.8,429.7" fill="none" stroke="#ddd522" stroke-width="1.15"/><polyline points="816.5,372.2 816.5,390.8" fill="none" stroke="#ddd522" stroke-width="1.15"/><polyline points="819.5,372.6 819.5,390.8" fill="none" stroke="#ddd522" stroke-width="1.15"/><polyline points="823.6,373.7 823.6,390.8" fill="none" stroke="#ddd522" stroke-width="1.15"/><polyline points="821.6,333 821.6,390.8" fill="none" stroke="#ddd522" stroke-width="1.15"/><polyline points="648.5,267 648.5,321.2" fill="none" stroke="#ddd522" stroke-width="1.15"/><line x1="648.5" y1="321.2" x2="648.5" y2="348" stroke="#e9e4ee" stroke-width="1.0" opacity="0.85"/><polyline points="661.5,305 661.5,324" fill="none" stroke="#ddd522" stroke-width="1.15"/><line x1="661.5" y1="324" x2="661.5" y2="346" stroke="#e9e4ee" stroke-width="1.0" opacity="0.85"/><polyline points="450.4,422 450.4,435.6" fill="none" stroke="#ddd522" stroke-width="1.15"/><line x1="450.4" y1="435.6" x2="450.4" y2="462.5" stroke="#e9e4ee" stroke-width="1.0" opacity="0.85"/><polyline points="462,419.4 462,437" fill="none" stroke="#ddd522" stroke-width="1.15"/><line x1="462" y1="437" x2="462" y2="460" stroke="#e9e4ee" stroke-width="1.0" opacity="0.85"/><polyline points="591.5,504.8 591.5,517.2" fill="none" stroke="#ddd522" stroke-width="1.15"/><line x1="591.5" y1="517.2" x2="591.5" y2="545" stroke="#e9e4ee" stroke-width="1.0" opacity="0.85"/><polyline points="576.7,502.5 576.7,520" fill="none" stroke="#ddd522" stroke-width="1.15"/><line x1="576.7" y1="520" x2="576.7" y2="543" stroke="#e9e4ee" stroke-width="1.0" opacity="0.85"/><polyline points="343.6,227.4 343.6,246" fill="none" stroke="#ddd522" stroke-width="1.15"/><line x1="343.6" y1="246" x2="343.6" y2="266" stroke="#ff5a20" stroke-width="1.1" opacity="1"/><polyline points="356,241 356,244.5" fill="none" stroke="#ddd522" stroke-width="1.15"/><polyline points="662,413.3 662,431" fill="none" stroke="#ddd522" stroke-width="1.15"/><line x1="662" y1="431" x2="662" y2="450" stroke="#e9e4ee" stroke-width="1.0" opacity="0.85"/><polyline points="680,416.5 680,431" fill="none" stroke="#ddd522" stroke-width="1.15"/><polyline points="269.9,320.7 269.9,332" fill="none" stroke="#ddd522" stroke-width="1.15"/><line x1="269.9" y1="332" x2="269.9" y2="358.5" stroke="#e9e4ee" stroke-width="1.0" opacity="0.85"/><polyline points="259.3,325.6 259.3,334" fill="none" stroke="#ddd522" stroke-width="1.15"/><line x1="259.3" y1="334" x2="259.3" y2="358" stroke="#e9e4ee" stroke-width="1.0" opacity="0.85"/><polyline points="302.8,299 302.8,312" fill="none" stroke="#ddd522" stroke-width="1.15"/><line x1="302.8" y1="312" x2="302.8" y2="338" stroke="#e9e4ee" stroke-width="1.0" opacity="0.85"/><polyline points="310.5,293.3 310.5,313.5" fill="none" stroke="#ddd522" stroke-width="1.15"/><line x1="310.5" y1="313.5" x2="310.5" y2="334.7" stroke="#e9e4ee" stroke-width="1.0" opacity="0.85"/><polyline points="315.4,294 315.4,313.6" fill="none" stroke="#ddd522" stroke-width="1.15"/><polyline points="325.8,270 315.4,294" fill="none" stroke="#ddd522" stroke-width="1.15"/><line x1="378.4" y1="180.5" x2="378.4" y2="194.5" stroke="#e8202a" stroke-width="1"/><line x1="409.3" y1="198.4" x2="409.3" y2="212.4" stroke="#e8202a" stroke-width="1"/><line x1="474.4" y1="184.7" x2="474.4" y2="198.7" stroke="#e8202a" stroke-width="1"/><line x1="514.5" y1="195.7" x2="514.5" y2="209.7" stroke="#e8202a" stroke-width="1"/><line x1="534.3" y1="219.2" x2="534.3" y2="233.2" stroke="#e8202a" stroke-width="1"/><line x1="510.1" y1="256.7" x2="510.1" y2="270.7" stroke="#e8202a" stroke-width="1"/><line x1="540.9" y1="274.3" x2="540.9" y2="288.3" stroke="#e8202a" stroke-width="1"/><line x1="712.8" y1="403" x2="712.8" y2="422" stroke="#ff6a1a" stroke-width="1"/><line x1="755" y1="427.1" x2="755" y2="446.1" stroke="#ff6a1a" stroke-width="1"/><line x1="820.9" y1="388.2" x2="820.9" y2="407.2" stroke="#ff6a1a" stroke-width="1"/><path d="M437.6 89.5l-2.3 8.2h4.6z" fill="#19e619"/><path d="M377.5 115l-2.3 8.2h4.6z" fill="#19e619"/><path d="M648.5 259.4l-2.3 8.2h4.6z" fill="#19e619"/><path d="M821.6 325.5l-2.3 8.2h4.6z" fill="#19e619"/><path d="M511.6 128h4.6l-2.3 8.6z" fill="#f01414"/><path d="M535.9 208.4h4.6l-2.3 8.6z" fill="#f01414"/><path d="M752.5 362h4.6l-2.3 8.6z" fill="#f01414"/><path d="M784.5 289h4.6l-2.3 8.6z" fill="#f01414"/>
<path d="M411.7 60V99A126.5 73 0 0 0 664.7 99V60Z" fill="#0a1932" fill-opacity=".195"/>
<g clip-path="url(#topc)"><path d="M411.7 60V99A126.5 73 0 0 0 664.7 99V60Z" fill="#000" fill-opacity=".06"/></g>
<path d="M523 115.7A15 8.7 0 0 1 553 115.7V212.3A15 8.7 0 0 1 523 212.3Z" fill="#000" fill-opacity=".267"/>
<ellipse cx="538" cy="125.4" rx="15" ry="8.5" fill="#000" fill-opacity=".132"/>
</g>
</svg>
<div id="title"><svg class="abs" style="left:3.6px;top:3.6px" width="8" height="8" viewBox="0 0 8 8"><rect width="8" height="8" rx="1" fill="#f7b155"/><rect x=".8" y=".8" width="6.4" height="6.4" fill="#f08a1d"/><path d="M2.4 6.6V1.6H5.8V2.8H3.8V3.6H5.4V4.7H3.8V6.6Z" fill="#fff"/></svg><div class="abs" style="left:14.80px;top:3.76px;font-size:6.9px;line-height:8.28px;height:8.28px;color:#9a9a9a;white-space:nowrap;transform-origin:0 50%;transform:scaleX(0.8847);">Autodesk Fusion 360 (Education License)</div><div class="abs" style="left:950.5px;top:7px;width:6px;height:1px;background:#c6c6c6"></div><div class="abs" style="left:975px;top:3.6px;width:6.4px;height:6.4px;border:1px solid #cdcdcd"></div><svg class="abs" style="left:999.6px;top:3.4px" width="8" height="8" viewBox="0 0 8 8"><path d="M.8 .8L7.2 7.2M7.2 .8L.8 7.2" stroke="#c0c0c0" stroke-width=".9"/></svg></div>
<div id="qat"><div id="qatl"></div><div id="qatr"></div><svg class="abs" style="left:4.8px;top:3.9px" width="7.4" height="7.4" viewBox="0 0 8.7 8.7"><g fill="#4b4b4b"><rect x="0" y="0" width="2.3" height="2.3"/><rect x="3.2" y="0" width="2.3" height="2.3"/><rect x="6.4" y="0" width="2.3" height="2.3"/><rect x="0" y="3.2" width="2.3" height="2.3"/><rect x="3.2" y="3.2" width="2.3" height="2.3"/><rect x="6.4" y="3.2" width="2.3" height="2.3"/><rect x="0" y="6.4" width="2.3" height="2.3"/><rect x="3.2" y="6.4" width="2.3" height="2.3"/><rect x="6.4" y="6.4" width="2.3" height="2.3"/></g></svg><svg class="abs" style="left:22.2px;top:3.6px" width="6.9" height="8.2" viewBox="0 0 8 10"><path d="M.4 .3H4.8L7.4 2.9V9.6H.4Z" fill="#505050"/><path d="M4.8 .3V2.9H7.4" fill="#8a8a8a"/></svg><svg class="abs" style="left:32.4px;top:6px" width="3.8" height="2.6" viewBox="0 0 4.4 3"><path d="M.1 .2H4.3L2.2 2.9Z" fill="#3c3c3c"/></svg><svg class="abs" style="left:46.1px;top:4.2px" width="7" height="7" viewBox="0 0 9 9"><path d="M.5 .5H8.5V8.5H.5Z" fill="none" stroke="#8f8f8f" stroke-width="1"/><rect x="2.2" y=".6" width="4.4" height="2.6" fill="#8f8f8f"/><rect x="2" y="5" width="5" height="3.4" fill="#8f8f8f"/></svg><svg class="abs" style="left:63.8px;top:4.2px" width="7" height="7" viewBox="0 0 9 9"><path d="M1.6 3.2H5.4Q8 3.2 8 6V8" fill="none" stroke="#999" stroke-width="1.1"/><path d="M3.6 .6L.8 3.2 3.6 5.8" fill="none" stroke="#999" stroke-width="1.1"/></svg><svg class="abs" style="left:75.6px;top:6px" width="3.4" height="2.4" viewBox="0 0 4 2.8"><path d="M.1 .2H3.9L2 2.7Z" fill="#9a9a9a"/></svg><svg class="abs" style="left:85.6px;top:4.2px" width="7" height="7" viewBox="0 0 9 9"><path d="M7.4 3.2H3.6Q1 3.2 1 6V8" fill="none" stroke="#999" stroke-width="1.1"/><path d="M5.4 .6L8.2 3.2 5.4 5.8" fill="none" stroke="#999" stroke-width="1.1"/></svg><svg class="abs" style="left:97px;top:6px" width="3.4" height="2.4" viewBox="0 0 4 2.8"><path d="M.1 .2H3.9L2 2.7Z" fill="#9a9a9a"/></svg><svg class="abs" style="left:440.4px;top:4px" width="9" height="9" viewBox="0 0 9 9"><path d="M.4 2L4.4 .4 8.6 1.8 4.6 3.4Z" fill="#7a7a7a"/><path d="M.4 2.4V7L4.3 8.8V3.8Z" fill="#555"/><path d="M4.9 3.8V8.8L8.6 7V2.3Z" fill="#888"/></svg><div class="abs" style="left:451.20px;top:5.16px;font-size:6.9px;line-height:8.28px;height:8.28px;color:#444;white-space:nowrap;transform-origin:0 50%;transform:scaleX(0.9107);">płytka wypychaczy z przodu do fusion360 v3</div><svg class="abs" style="left:909.6px;top:5.8px" width="6" height="6" viewBox="0 0 6 6"><path d="M.8 .8L5.2 5.2M5.2 .8L.8 5.2" stroke="#707070" stroke-width=".85"/></svg><svg class="abs" style="left:924.4px;top:4.4px" width="8" height="8" viewBox="0 0 8 8"><path d="M4 .4V7.6M.4 4H7.6" stroke="#7c7c7c" stroke-width="1.5"/></svg><div class="abs" style="left:937px;top:-1px;width:18px;height:17px;background:#0d9cec"></div><svg class="abs" style="left:940.8px;top:3.2px" width="10" height="10" viewBox="0 0 10 10"><circle cx="5" cy="5" r="4.6" fill="#fff"/><circle cx="6" cy="3.9" r="2" fill="#0d9cec"/><path d="M5 5L2.6 7.5" stroke="#0d9cec" stroke-width="1.5" stroke-linecap="round"/><path d="M6 3.9L8 2" stroke="#fff" stroke-width="1.3"/></svg><svg class="abs" style="left:958.3px;top:3.4px" width="10" height="10" viewBox="0 0 10 10"><circle cx="5" cy="5" r="4.5" fill="#8b8b8b"/><circle cx="5" cy="5" r="2.9" fill="#9d9d9d" stroke="#777" stroke-width=".6"/><path d="M5 3V5.2H6.8" fill="none" stroke="#6a6a6a" stroke-width=".8"/></svg><svg class="abs" style="left:975.8px;top:3.4px" width="10" height="10" viewBox="0 0 10 10"><circle cx="5" cy="5" r="4.4" fill="#666"/><text x="5" y="7.7" font-size="7.4" font-weight="bold" fill="#dcdcdc" text-anchor="middle" font-family="Liberation Sans,sans-serif">?</text></svg><svg class="abs" style="left:996px;top:2.4px" width="12" height="12" viewBox="0 0 12 12"><defs><clipPath id="av"><circle cx="6" cy="6" r="5.6"/></clipPath></defs><g clip-path="url(#av)"><rect width="12" height="12" fill="#b9c2c8"/><ellipse cx="6" cy="6.2" rx="4.8" ry="5" fill="#cf9886"/><ellipse cx="6" cy="1.8" rx="4" ry="1.8" fill="#a9aaac"/><ellipse cx="6" cy="9" rx="3.4" ry="2" fill="#a85a4a"/><path d="M3.4 5.6H5M7 5.6H8.6" stroke="#3a2620" stroke-width=".8"/></g></svg></div>
<div id="ribbon"></div><div class="abs" style="left:11px;top:42.5px;width:58px;height:31px;border:1px solid #e4e4e4;border-radius:3px;background:#f6f6f6"></div><div class="abs" style="left:15.50px;top:54.22px;font-size:6.8px;line-height:8.16px;height:8.16px;color:#3c3c3c;white-space:nowrap;transform-origin:0 50%;transform:scaleX(0.8094);font-weight:bold;">MANUFACTURE</div><svg class="abs" style="left:59.4px;top:56.9px" width="4.2" height="3" viewBox="0 0 4.2 3"><path d="M.1 .2H4.1L2.1 2.9Z" fill="#262626"/></svg><div class="abs" style="left:80.50px;top:38.52px;font-size:6.8px;line-height:8.16px;height:8.16px;color:#1193dc;white-space:nowrap;transform-origin:0 50%;transform:scaleX(0.8336);font-weight:bold;">MILLING</div><div class="abs" style="left:74.2px;top:47.8px;width:36.6px;height:1.9px;background:#0f93d9"></div><div class="abs" style="left:129.50px;top:38.52px;font-size:6.8px;line-height:8.16px;height:8.16px;color:#5a5a5a;white-space:nowrap;transform-origin:0 50%;transform:scaleX(0.7425);">TURNING</div><div class="abs" style="left:176.20px;top:38.52px;font-size:6.8px;line-height:8.16px;height:8.16px;color:#5a5a5a;white-space:nowrap;transform-origin:0 50%;transform:scaleX(0.7589);">ADDITIVE</div><div class="abs" style="left:226.00px;top:38.52px;font-size:6.8px;line-height:8.16px;height:8.16px;color:#5a5a5a;white-space:nowrap;transform-origin:0 50%;transform:scaleX(0.7334);">PROBING</div><div class="abs" style="left:275.00px;top:38.52px;font-size:6.8px;line-height:8.16px;height:8.16px;color:#5a5a5a;white-space:nowrap;transform-origin:0 50%;transform:scaleX(0.7695);">FABRICATION</div><div class="abs" style="left:335.00px;top:38.52px;font-size:6.8px;line-height:8.16px;height:8.16px;color:#5a5a5a;white-space:nowrap;transform-origin:0 50%;transform:scaleX(0.7152);">UTILITIES</div><div class="sep" style="left:118.5px"></div><div class="sep" style="left:192.5px"></div><div class="sep" style="left:313px"></div><div class="sep" style="left:364.5px"></div><div class="sep" style="left:413px"></div><div class="sep" style="left:453.5px"></div><div class="sep" style="left:527px"></div><div class="sep" style="left:578.5px"></div><div class="sep" style="left:620px"></div><div class="abs" style="left:81.00px;top:70.74px;font-size:6.6px;line-height:7.92px;height:7.92px;color:#4c4c4c;white-space:nowrap;transform-origin:0 50%;transform:scaleX(0.7498);">SETUP</div><svg class="abs" style="left:99.4px;top:73.6px" width="3.2" height="2.4" viewBox="0 0 4 3"><path d="M.1 .2H3.9L2 2.9Z" fill="#262626"/></svg><div class="abs" style="left:148.50px;top:70.74px;font-size:6.6px;line-height:7.92px;height:7.92px;color:#4c4c4c;white-space:nowrap;transform-origin:0 50%;transform:scaleX(0.9600);">2D</div><svg class="abs" style="left:157.8px;top:73.6px" width="3.2" height="2.4" viewBox="0 0 4 3"><path d="M.1 .2H3.9L2 2.9Z" fill="#262626"/></svg><div class="abs" style="left:245.80px;top:70.74px;font-size:6.6px;line-height:7.92px;height:7.92px;color:#4c4c4c;white-space:nowrap;transform-origin:0 50%;transform:scaleX(0.8060);">3D</div><svg class="abs" style="left:254.6px;top:73.6px" width="3.2" height="2.4" viewBox="0 0 4 3"><path d="M.1 .2H3.9L2 2.9Z" fill="#262626"/></svg><div class="abs" style="left:324.00px;top:70.74px;font-size:6.6px;line-height:7.92px;height:7.92px;color:#4c4c4c;white-space:nowrap;transform-origin:0 50%;transform:scaleX(0.7523);">DRILLING</div><svg class="abs" style="left:349.0px;top:73.6px" width="3.2" height="2.4" viewBox="0 0 4 3"><path d="M.1 .2H3.9L2 2.9Z" fill="#262626"/></svg><div class="abs" style="left:372.20px;top:70.74px;font-size:6.6px;line-height:7.92px;height:7.92px;color:#4c4c4c;white-space:nowrap;transform-origin:0 50%;transform:scaleX(0.8044);">MULTI-AXIS</div><svg class="abs" style="left:403.4px;top:73.6px" width="3.2" height="2.4" viewBox="0 0 4 3"><path d="M.1 .2H3.9L2 2.9Z" fill="#262626"/></svg><div class="abs" style="left:421.40px;top:70.74px;font-size:6.6px;line-height:7.92px;height:7.92px;color:#4c4c4c;white-space:nowrap;transform-origin:0 50%;transform:scaleX(0.7442);">MODIFY</div><svg class="abs" style="left:442.79999999999995px;top:73.6px" width="3.2" height="2.4" viewBox="0 0 4 3"><path d="M.1 .2H3.9L2 2.9Z" fill="#262626"/></svg><div class="abs" style="left:475.50px;top:70.74px;font-size:6.6px;line-height:7.92px;height:7.92px;color:#4c4c4c;white-space:nowrap;transform-origin:0 50%;transform:scaleX(0.8079);">ACTIONS</div><svg class="abs" style="left:500.79999999999995px;top:73.6px" width="3.2" height="2.4" viewBox="0 0 4 3"><path d="M.1 .2H3.9L2 2.9Z" fill="#262626"/></svg><div class="abs" style="left:538.40px;top:70.74px;font-size:6.6px;line-height:7.92px;height:7.92px;color:#4c4c4c;white-space:nowrap;transform-origin:0 50%;transform:scaleX(0.8250);">MANAGE</div><svg class="abs" style="left:563.8px;top:73.6px" width="3.2" height="2.4" viewBox="0 0 4 3"><path d="M.1 .2H3.9L2 2.9Z" fill="#262626"/></svg><div class="abs" style="left:586.40px;top:70.74px;font-size:6.6px;line-height:7.92px;height:7.92px;color:#4c4c4c;white-space:nowrap;transform-origin:0 50%;transform:scaleX(0.7516);">INSPECT</div><svg class="abs" style="left:609.4px;top:73.6px" width="3.2" height="2.4" viewBox="0 0 4 3"><path d="M.1 .2H3.9L2 2.9Z" fill="#262626"/></svg><div class="abs" style="left:628.00px;top:70.74px;font-size:6.6px;line-height:7.92px;height:7.92px;color:#4c4c4c;white-space:nowrap;transform-origin:0 50%;transform:scaleX(0.7750);">SELECT</div><svg class="abs" style="left:649.8px;top:73.6px" width="3.2" height="2.4" viewBox="0 0 4 3"><path d="M.1 .2H3.9L2 2.9Z" fill="#262626"/></svg><svg class="abs" style="left:72.6px;top:51.6px" width="18" height="16" viewBox="0 0 18 16"><path d="M1 14.6V1.4H5.6L6.8 3H11.4V6" fill="#fafafa" stroke="#707070" stroke-width=".9"/><path d="M7 2.2L9.6 1.2 10.6 3" fill="none" stroke="#9a9a9a" stroke-width=".7"/><path d="M1 14.6L4.4 6H17L13.6 14.6Z" fill="#f4f4f4" stroke="#707070" stroke-width=".9" stroke-linejoin="round"/><path d="M5 9.6L8 8.6" stroke="#8cc6ef" stroke-width=".8"/></svg><svg class="abs" style="left:96.6px;top:50.6px" width="15.4" height="18" viewBox="0 0 15.4 18"><rect x=".6" y=".6" width="14" height="16.8" fill="#fff" stroke="#6c6c6c" stroke-width="1"/><text x="7.6" y="8" font-size="6.6" font-weight="bold" fill="#2f94dc" text-anchor="middle" font-family="Liberation Sans,sans-serif">G</text><path d="M3 10.6H4.4M3 13.6H4.4" stroke="#444" stroke-width="1.1"/><path d="M5.4 10.6H12.2M5.4 13.6H12.2" stroke="#777" stroke-width=".8"/></svg><svg class="abs" style="left:124px;top:50px" width="18.4" height="17.6" viewBox="0 0 18.4 17.6"><path d="M1.2 11L4 8.4 13.6 2 17.2 5.4V8.6L8.6 16.4 7 16.6 1.2 12.8Z" fill="#fbfbfb" stroke="#a89c8c" stroke-width=".8" stroke-linejoin="round"/><g stroke="#3b97df" stroke-width="2.1" stroke-linecap="round"><path d="M2.8 9.4L12.2 3"/><path d="M5.2 12.1L14.6 5.7"/><path d="M7.6 14.8L16.4 8.8"/></g><ellipse cx="12.6" cy="2.8" rx="1.5" ry="1.1" fill="#fff" stroke="#6a7f92" stroke-width=".6" transform="rotate(-34 12.6 2.8)"/><ellipse cx="2.4" cy="9.8" rx="1.2" ry="1" fill="#fff" stroke="#6a7f92" stroke-width=".5"/><ellipse cx="4.4" cy="12" rx="1.2" ry="1" fill="#fff" stroke="#6a7f92" stroke-width=".5"/></svg><svg class="abs" style="left:146.8px;top:50.4px" width="18.6" height="17.8" viewBox="0 0 18.6 17.8"><path d="M9.3 .8Q10 .8 10.8 1.4L17 6.6Q17.8 7.4 17.8 8.4T17 10.4L10.8 16.2Q10 17 9.3 17T7.8 16.2L1.6 10.4Q.8 9.6 .8 8.6T1.6 6.6L7.8 1.4Q8.6 .8 9.3 .8Z" fill="#fafafa" stroke="#8a8a8a" stroke-width=".9"/><path d="M3.6 8.2Q9.3 2.6 15 8.2" fill="none" stroke="#c8c8c8" stroke-width=".9"/><path d="M9.3 6.6L15.2 10.8 9.3 15 3.6 10.8Z" fill="#2f8fdc" stroke="#2f8fdc" stroke-width=".8" stroke-linejoin="round"/><path d="M7 11.4Q8 9.6 9.6 10.6T12 10.2" fill="none" stroke="#9fd0f3" stroke-width=".9"/></svg><svg class="abs" style="left:170.6px;top:51.4px" width="17" height="16.4" viewBox="0 0 17 16.4"><path d="M8.4 .8L15.9 8 8.4 15.2 .9 8Z" fill="#fcfcfc" stroke="#9a9a9a" stroke-width=".7" stroke-linejoin="round"/><path d="M.7 8.2L8.4 15.6 16.1 8.2V10.4L8.4 16.2 .7 10.4Z" fill="#a9d3f4"/><path d="M1.4 8L8.4 14.6 15.4 8" fill="none" stroke="#3b97df" stroke-width="2.2"/></svg><svg class="abs" style="left:199px;top:50.6px" width="17.6" height="17.4" viewBox="0 0 17.6 17.4"><path d="M3.6 1H16.8V12.6L13.6 16.6H.8V4.4Z" fill="#c6c6c6" stroke="#7e7e7e" stroke-width=".8" stroke-linejoin="round"/><path d="M.8 4.4H13.6V16.6" fill="none" stroke="#8c8c8c" stroke-width=".7"/><path d="M13.6 4.4L16.8 1" stroke="#8c8c8c" stroke-width=".7"/><rect x="3.6" y="2" width="12.4" height="10.4" fill="#aeb7bd"/><g stroke="#2f94dc" stroke-width="2" stroke-linecap="round"><path d="M5 4.4H14.6M4.4 7.4H14.6M5 10.4H13"/></g><path d="M5 5.8Q9 6.6 14 5.6M5 8.8Q9 9.6 13.6 8.8" stroke="#1a5f9a" stroke-width=".6" fill="none"/></svg><svg class="abs" style="left:221.6px;top:50px" width="19" height="18" viewBox="0 0 19 18"><path d="M1 12L9.6 6.4 15 10 6.4 16.4Z" fill="#dcdcdc" stroke="#bdbdbd" stroke-width=".7"/><path d="M1 12V13.6L6.4 17.6V16.4Z" fill="#c4c4c4"/><path d="M6.4 16.4V17.6L15 11.4V10Z" fill="#cfcfcf"/><ellipse cx="7.6" cy="11.6" rx="2.6" ry="1.7" fill="#ececec" stroke="#b0b0b0" stroke-width=".6"/><circle cx="12.4" cy="5.8" r="4.7" fill="#1d8fe0"/><circle cx="13.6" cy="4.6" r="1.9" fill="#fff"/><path d="M12.4 5.8L9.8 8.4" stroke="#fff" stroke-width="1.5" stroke-linecap="round"/><path d="M13.6 4.6L15.6 2.6" stroke="#1d8fe0" stroke-width="1.2"/></svg><svg class="abs" style="left:244.4px;top:50.6px" width="18" height="17.4" viewBox="0 0 18 17.4"><path d="M3.8 .8H17.2V11.6L13 16.6H.8V5Z" fill="#d9d9d9" stroke="#6f6f6f" stroke-width=".8" stroke-linejoin="round"/><path d="M13 5.4V16.6M13 5.4L17.2 .8" stroke="#8a8a8a" stroke-width=".7" fill="none"/><path d="M1.2 15.8V8Q1.6 2.4 5 1.4H13.4Q11 3 10.6 8V15.8Z" fill="#8cc6ef"/><g fill="none" stroke="#2a86cf" stroke-width="1.5"><path d="M2.6 15.6V8.4Q3 3.4 5.6 1.8"/><path d="M6 15.6V8.4Q6.4 3.4 9 1.8"/><path d="M9.4 15.6V8.4Q9.8 3.4 12.4 1.8"/></g><g fill="none" stroke="#1a4f86" stroke-width=".6"><path d="M4.3 15.6V8.4Q4.7 3.4 7.3 1.8M7.7 15.6V8.4Q8.1 3.4 10.7 1.8"/></g></svg><svg class="abs" style="left:267.4px;top:52.4px" width="18" height="14" viewBox="0 0 18 14"><ellipse cx="9" cy="9.2" rx="8.4" ry="4" fill="#e4e4e4" stroke="#8a8a8a" stroke-width=".7"/><path d="M1.4 8.4Q1.6 1 9 .8T16.6 8.4Q16 11.4 9 11.6T1.4 8.4Z" fill="#3b9be0"/><ellipse cx="9" cy="4.2" rx="4.6" ry="2" fill="none" stroke="#1a5f9a" stroke-width=".7"/><ellipse cx="9" cy="3.6" rx="2" ry=".9" fill="#1a5f9a"/><path d="M1.6 8Q9 12 16.4 8" fill="none" stroke="#9fd0f3" stroke-width=".7"/></svg><svg class="abs" style="left:290.4px;top:50.6px" width="17.4" height="16.6" viewBox="0 0 17.4 16.6"><path d="M.8 11.6L6 15.8H16.6V11.6Z" fill="#cfcfcf" stroke="#8a8a8a" stroke-width=".7" stroke-linejoin="round"/><path d="M2 11.8Q3 7.6 5.4 6.6 5 4.2 6.6 3.4 6.6 1 8.2 .8T9.8 3.2Q11.6 4 11.2 6.4 15 8 15.8 11.8 9 14.6 2 11.8Z" fill="#3b9be0"/><g fill="none" stroke="#1a5f9a" stroke-width=".7"><path d="M5.4 6.6Q8.2 8 11.2 6.4"/><path d="M6.6 3.4Q8.2 4.2 9.8 3.2"/><path d="M3.6 9.4Q9 12 14.2 9.2"/></g></svg>
<svg class="abs" style="left:318.4px;top:51px" width="18" height="17" viewBox="0 0 18 17"><path d="M1 10.4L6 4.4H17L12 10.4Z" fill="#f6f6f6" stroke="#555" stroke-width=".9" stroke-linejoin="round"/><path d="M1 10.4V11.8H12L17 5.8V4.4" fill="none" stroke="#555" stroke-width=".8"/><rect x="6.6" y=".8" width="4.6" height="4.2" rx=".8" fill="#e2e2e2" stroke="#666" stroke-width=".7"/><rect x="7.2" y="5" width="3.4" height="5.6" fill="#6fb6ec"/><rect x="7.2" y="10.6" width="3.4" height="4" fill="#a9a9a9" stroke="#666" stroke-width=".6"/><path d="M7.2 14.6L8.9 16.4 10.6 14.6Z" fill="#777"/><path d="M7.2 12L10.6 11M7.2 13.6L10.6 12.6" stroke="#555" stroke-width=".5"/></svg><svg class="abs" style="left:341px;top:50.4px" width="19" height="18" viewBox="0 0 19 18"><path d="M1.4 4H8V13H1.4Z" fill="#ececec" stroke="#d6d6d6" stroke-width=".7"/><path d="M5 12L9 15.6 13 12Z" fill="#e2e2e2"/><rect x="7.6" y="10" width="3" height="5" fill="#dedede"/><circle cx="12.3" cy="5.9" r="4.7" fill="#1d8fe0"/><circle cx="13.5" cy="4.7" r="1.9" fill="#fff"/><path d="M12.3 5.9L9.700000000000001 8.5" stroke="#fff" stroke-width="1.5" stroke-linecap="round"/><path d="M13.5 4.7L15.5 2.7" stroke="#1d8fe0" stroke-width="1.2"/></svg><svg class="abs" style="left:380px;top:50.6px" width="18.6" height="17" viewBox="0 0 18.6 17"><path d="M.8 6L6 4 11 7V12.6L5.6 14.6 .8 11.6Z" fill="#3b9be0"/><path d="M11 7L17.8 4.4V9.6L11 14.8V16L5.6 14.6 11 12.6Z" fill="#c4c9cd" stroke="#9aa0a4" stroke-width=".5"/><path d="M11 7L17.8 4.4 14 2.6 8.6 4.8Z" fill="#e3e6e8"/><ellipse cx="9.6" cy="3.4" rx="3.4" ry="2.4" fill="#f1f1f1" stroke="#a5a5a5" stroke-width=".6"/><rect x="7.4" y="5.4" width="3.4" height="5.6" fill="#8f8f8f"/><path d="M7.4 7L10.8 6.2M7.4 8.6L10.8 7.8M7.4 10.2L10.8 9.4" stroke="#5c5c5c" stroke-width=".6"/><path d="M5.6 8.6L11 11.6V14.8L5.6 14.6Z" fill="#2a86cf"/></svg><svg class="abs" style="left:425.6px;top:50.4px" width="18" height="18" viewBox="0 0 18 18"><path d="M1.6 3.4H7M2.6 6H7" stroke="#d0d0d0" stroke-width=".8"/><path d="M4.6 6.4L11.4 13.6M11.6 6.4L5 13.6" stroke="#8a8a8a" stroke-width="1.3"/><ellipse cx="5.6" cy="14.6" rx="1.9" ry="2.3" fill="none" stroke="#8a8a8a" stroke-width="1.1"/><ellipse cx="10.8" cy="14.6" rx="1.9" ry="2.3" fill="none" stroke="#8a8a8a" stroke-width="1.1"/><circle cx="11.6" cy="5.2" r="4.7" fill="#1d8fe0"/><circle cx="12.799999999999999" cy="4.0" r="1.9" fill="#fff"/><path d="M11.6 5.2L9.0 7.800000000000001" stroke="#fff" stroke-width="1.5" stroke-linecap="round"/><path d="M12.799999999999999 4.0L14.8 2.0" stroke="#1d8fe0" stroke-width="1.2"/></svg><svg class="abs" style="left:459.4px;top:51px" width="16.6" height="17" viewBox="0 0 16.6 17"><path d="M8.3 1L15.8 8.5 8.3 16 .8 8.5Z" fill="none" stroke="#3b9be0" stroke-width="1.1"/><path d="M5 8.6L8.3 5.6 11.6 8.6 8.3 11.8Z" fill="none" stroke="#3b9be0" stroke-width=".9"/><rect x="6.6" y=".6" width="3.8" height="3" rx=".8" fill="#bdbdbd" stroke="#777" stroke-width=".6"/><rect x="7.2" y="3.6" width="2.6" height="6" fill="#9a9a9a" stroke="#666" stroke-width=".5"/><path d="M7.2 5.4L9.8 4.8M7.2 7L9.8 6.4M7.2 8.6L9.8 8" stroke="#555" stroke-width=".5"/></svg><svg class="abs" style="left:482.8px;top:50.4px" width="15.6" height="18" viewBox="0 0 15.6 18"><rect x=".6" y=".6" width="14.4" height="16.8" fill="#fff" stroke="#8a8a8a" stroke-width="1"/><text x="7.8" y="8.2" font-size="6.8" font-weight="bold" fill="#2f8fd8" text-anchor="middle" font-family="Liberation Mono,monospace">G1</text><text x="7.8" y="14.6" font-size="6.8" font-weight="bold" fill="#2f8fd8" text-anchor="middle" font-family="Liberation Mono,monospace">G2</text></svg><svg class="abs" style="left:506.6px;top:50.8px" width="14" height="16.8" viewBox="0 0 14 16.8"><rect x=".6" y=".6" width="12.6" height="15.6" fill="#fff" stroke="#777" stroke-width="1"/><rect x="3" y="3" width="7.8" height="2.2" fill="none" stroke="#777" stroke-width=".8"/><path d="M3 8H10.8M3 10.4H10.8M3 12.8H10.8" stroke="#777" stroke-width=".9"/></svg><svg class="abs" style="left:533px;top:50.6px" width="18" height="17.4" viewBox="0 0 18 17.4"><rect x=".6" y=".8" width="5.6" height="2.2" fill="#d9d9d9" stroke="#9a9a9a" stroke-width=".5"/><rect x="2.6" y="3" width="1.6" height="8" fill="#cfcfcf" stroke="#9a9a9a" stroke-width=".4"/><rect x="2.4" y="10.6" width="2" height="1.8" fill="#e83030"/><path d="M6.6 3.4H10.4V13.4H6.6Z" fill="#c2c2c2" stroke="#9a9a9a" stroke-width=".5"/><path d="M5.2 14.4L7.4 10.4H10.4V14.4Z" fill="#f0a010"/><rect x="11.4" y="5" width="5.8" height="4" rx=".8" fill="#d2d2d2" stroke="#8a8a8a" stroke-width=".6"/><rect x="12.6" y="9" width="3.2" height="7.6" fill="#a5a5a5" stroke="#777" stroke-width=".5"/><path d="M12.6 11L15.8 10.2M12.6 12.8L15.8 12M12.6 14.6L15.8 13.8" stroke="#666" stroke-width=".5"/></svg><svg class="abs" style="left:556.2px;top:52.6px" width="18" height="14" viewBox="0 0 18 14"><rect x=".6" y=".8" width="16.8" height="10.4" rx="2.4" fill="#e6e9ec" stroke="#7b8893" stroke-width=".9"/><rect x=".6" y="10.6" width="16.8" height="2.8" fill="#1d5f9c"/><rect x="4.6" y="2.6" width="7.4" height="6.8" fill="#8cc6ef" stroke="#3b8fd0" stroke-width=".7"/><rect x="6.8" y="4.6" width="3" height="2.8" fill="#e9f3fb"/><rect x="13.4" y="3.4" width="2.6" height="5.2" fill="#d6dadd" stroke="#9aa5ae" stroke-width=".4"/><rect x="14.1" y="6.2" width="1.2" height="1.2" fill="#d03070"/></svg><svg class="abs" style="left:591.6px;top:54.4px" width="16.4" height="10.6" viewBox="0 0 16.4 10.6"><path d="M.8 1.2V5.2M15.6 1.2V5.2M.8 3.2H15.6" stroke="#666" stroke-width=".8" fill="none"/><path d="M.8 3.2L2.6 2.2V4.2ZM15.6 3.2L13.8 2.2V4.2Z" fill="#666"/><rect x=".6" y="6.4" width="15.2" height="3.2" fill="#f0a010"/><path d="M3 6.4V7.8M5.4 6.4V7.8M7.8 6.4V7.8M10.2 6.4V7.8M12.6 6.4V7.8" stroke="#b87400" stroke-width=".5"/></svg><svg class="abs" style="left:630.4px;top:49.4px" width="20.8" height="19.8" viewBox="0 0 20.8 19.8"><rect width="20.8" height="19.8" fill="#129be9"/><rect x="2.2" y="2.4" width="14.6" height="12.6" fill="none" stroke="#7ad06e" stroke-width=".8" stroke-dasharray="1.6 1.2"/><path d="M12.6 8.6V17.6L14.8 15.6 16.2 18.6 17.6 18 16.2 15 19 14.8Z" fill="#fff" stroke="#0f7fc2" stroke-width=".3"/></svg>
<div class="abs" style="left:6px;top:82.5px;width:158.5px;height:12.5px;background:#f0f0f0;border:1px solid #dadada;border-left-color:#e6e6e6"></div>
<svg class="abs" style="left:8.6px;top:86.6px" width="6" height="4.4" viewBox="0 0 6 4.4"><path d="M2.8 0V4.4L0 2.2ZM5.8 0V4.4L3 2.2Z" fill="#222"/></svg>
<div class="abs" style="left:19.00px;top:85.02px;font-size:6.3px;line-height:7.56px;height:7.56px;color:#6a6a6a;white-space:nowrap;transform-origin:0 50%;transform:scaleX(0.8663);">BROWSER</div>
<div class="abs" style="left:153.5px;top:86.3px;width:5px;height:5px;border-radius:50%;background:#2a2a2a"></div><div class="abs" style="left:155.2px;top:88.4px;width:1.6px;height:.9px;background:#ddd"></div>
<div class="abs" style="left:161.6px;top:84.5px;width:1px;height:8.5px;background:#9a9a9a"></div>
<svg class="abs" style="left:14.8px;top:100.39999999999999px" width="7" height="7" viewBox="0 0 7 7"><path d="M6.3 .7V6.3H.7Z" fill="#333" stroke="#333" stroke-width=".6" stroke-linejoin="round"/><path d="M5.2 3.2V5.2H3.2Z" fill="#aaa"/></svg>
<svg class="abs" style="left:25.9px;top:100.1px;opacity:1" width="10" height="7" viewBox="0 0 10 7"><path d="M.4 3.5Q5 -1.6 9.6 3.5 5 8.6 .4 3.5Z" fill="#c2c2c2" stroke="#9a9a9a" stroke-width=".6"/><circle cx="5" cy="3.5" r="1.7" fill="#858585"/></svg>
<svg class="abs" style="left:39px;top:98.6px" width="10" height="10" viewBox="0 0 10 10"><path d="M1.2 9V3.4Q1.2 1 3 1T4.8 3.4V4.6H7.6Q8.9 4.6 8.9 6V9Z" fill="#fff" stroke="#484848" stroke-width=".75"/><path d="M4.8 4.6V6.6H6.4" fill="none" stroke="#484848" stroke-width=".6"/></svg>
<div class="abs" style="left:52px;top:98.1px;width:110px;height:11px;background:rgba(242,242,242,.9)"></div>
<div class="abs" style="left:55.90px;top:99.76px;font-size:6.4px;line-height:7.68px;height:7.68px;color:#454545;white-space:nowrap;transform-origin:0 50%;transform:scaleX(0.9083);">płytka wypychaczy z przodu do fusion...</div>
<svg class="abs" style="left:35.6px;top:111.1px" width="9" height="10" viewBox="0 0 9 10"><path d="M.8 .6H5.4L8.2 3.4V9.4H.8Z" fill="#fff" stroke="#444" stroke-width=".9"/><rect x=".8" y="6.8" width="7.4" height="2.6" fill="#d9a418"/><path d="M5.4 .6V3.4H8.2" fill="none" stroke="#444" stroke-width=".7"/></svg>
<div class="abs" style="left:49px;top:111.0px;width:31px;height:11px;background:rgba(242,242,242,.9)"></div>
<div class="abs" style="left:52.10px;top:112.66px;font-size:6.4px;line-height:7.68px;height:7.68px;color:#454545;white-space:nowrap;transform-origin:0 50%;transform:scaleX(0.8507);">Units: mm</div>
<svg class="abs" style="left:24.0px;top:124.69999999999999px" width="7" height="9" viewBox="0 0 7 9"><path d="M1 .8L6 4.5 1 8.2Z" fill="#fff" stroke="#333" stroke-width=".9" stroke-linejoin="round"/></svg>
<svg class="abs" style="left:36px;top:125.79999999999998px" width="9" height="7" viewBox="0 0 9 7"><path d="M.2 .4H3.6L4.4 1.4H8.8V6.6H.2Z" fill="#8c8c8c"/><rect x=".2" y="2" width="8.6" height="4.6" fill="#9a9a9a"/></svg>
<div class="abs" style="left:49.5px;top:123.69999999999999px;width:42.0px;height:11px;background:rgba(242,242,242,.9)"></div>
<div class="abs" style="left:52.10px;top:125.36px;font-size:6.4px;line-height:7.68px;height:7.68px;color:#454545;white-space:nowrap;transform-origin:0 50%;transform:scaleX(0.9119);">Named Views</div>
<svg class="abs" style="left:24.0px;top:137.4px" width="7" height="9" viewBox="0 0 7 9"><path d="M1 .8L6 4.5 1 8.2Z" fill="#fff" stroke="#333" stroke-width=".9" stroke-linejoin="round"/></svg>
<svg class="abs" style="left:35.5px;top:138.4px;opacity:1" width="10" height="7" viewBox="0 0 10 7"><path d="M.4 3.5Q5 -1.6 9.6 3.5 5 8.6 .4 3.5Z" fill="#c2c2c2" stroke="#9a9a9a" stroke-width=".6"/><circle cx="5" cy="3.5" r="1.7" fill="#858585"/></svg>
<svg class="abs" style="left:48.6px;top:136.9px" width="10" height="10" viewBox="0 0 10 10"><path d="M1.2 9V3.4Q1.2 1 3 1T4.8 3.4V4.6H7.6Q8.9 4.6 8.9 6V9Z" fill="#fff" stroke="#484848" stroke-width=".75"/><path d="M4.8 4.6V6.6H6.4" fill="none" stroke="#484848" stroke-width=".6"/></svg>
<div class="abs" style="left:62px;top:136.4px;width:25px;height:11px;background:rgba(242,242,242,.9)"></div>
<div class="abs" style="left:65.60px;top:138.06px;font-size:6.4px;line-height:7.68px;height:7.68px;color:#454545;white-space:nowrap;transform-origin:0 50%;transform:scaleX(0.8482);">Models</div>
<svg class="abs" style="left:24.2px;top:151.3px" width="7" height="7" viewBox="0 0 7 7"><path d="M6.3 .7V6.3H.7Z" fill="#333" stroke="#333" stroke-width=".6" stroke-linejoin="round"/><path d="M5.2 3.2V5.2H3.2Z" fill="#aaa"/></svg>
<svg class="abs" style="left:34.5px;top:148.9px" width="11" height="10" viewBox="0 0 11 10"><path d="M.6 7.6V.8H3.8L4.6 1.9H8V3.4" fill="none" stroke="#444" stroke-width=".8"/><path d="M.6 7.6L2.4 3.4H10.2L8.4 7.6Z" fill="#fff" stroke="#444" stroke-width=".8" stroke-linejoin="round"/><path d="M.4 9.3H10" stroke="#3b6fb5" stroke-width=".9" stroke-dasharray="1 1"/></svg>
<div class="abs" style="left:49.5px;top:149.0px;width:23.5px;height:11px;background:rgba(242,242,242,.9)"></div>
<div class="abs" style="left:52.60px;top:150.66px;font-size:6.4px;line-height:7.68px;height:7.68px;color:#454545;white-space:nowrap;transform-origin:0 50%;transform:scaleX(0.8532);">Setups</div>
<div class="abs" style="left:35px;top:157.3px;width:39.5px;height:0;border-top:1px dotted #2f5fa8"></div>
<svg class="abs" style="left:33.8px;top:164.0px" width="7" height="7" viewBox="0 0 7 7"><path d="M6.3 .7V6.3H.7Z" fill="#333" stroke="#333" stroke-width=".6" stroke-linejoin="round"/><path d="M5.2 3.2V5.2H3.2Z" fill="#aaa"/></svg>
<svg class="abs" style="left:43.5px;top:161.6px" width="11" height="10" viewBox="0 0 11 10"><path d="M.6 7.6V.8H3.8L4.6 1.9H8V3.4" fill="none" stroke="#444" stroke-width=".8"/><path d="M.6 7.6L2.4 3.4H10.2L8.4 7.6Z" fill="#fff" stroke="#444" stroke-width=".8" stroke-linejoin="round"/><path d="M.4 9.3H10" stroke="#3b6fb5" stroke-width=".9" stroke-dasharray="1 1"/></svg>
<div class="abs" style="left:57.2px;top:162.2px;width:30.799999999999997px;height:9.4px;background:#b6d7f3"></div>
<div class="abs" style="left:62.40px;top:163.30px;font-size:6.5px;line-height:7.80px;height:7.80px;color:#1d2f55;white-space:nowrap;transform-origin:0 50%;transform:scaleX(0.8952);font-weight:bold;">Setup1</div>
<div class="abs" style="left:44px;top:170.3px;width:44px;height:0;border-top:1px dotted #2f5fa8"></div>
<svg class="abs" style="left:89.2px;top:163.6px" width="8" height="8" viewBox="0 0 8 8"><circle cx="4" cy="4" r="3.2" fill="#fff" stroke="#333" stroke-width=".8"/><circle cx="4" cy="4" r="1.3" fill="#222"/></svg>
<svg class="abs" style="left:43.1px;top:175.6px" width="7" height="9" viewBox="0 0 7 9"><path d="M1 .8L6 4.5 1 8.2Z" fill="#fff" stroke="#333" stroke-width=".9" stroke-linejoin="round"/></svg>
<svg class="abs" style="left:54.2px;top:176.6px;opacity:0.22" width="10" height="7" viewBox="0 0 10 7"><path d="M.4 3.5Q5 -1.6 9.6 3.5 5 8.6 .4 3.5Z" fill="#c2c2c2" stroke="#9a9a9a" stroke-width=".6"/><circle cx="5" cy="3.5" r="1.7" fill="#858585"/></svg>
<div class="abs" style="left:67.2px;top:174.75px;width:57.599999999999994px;height:10.3px;background:#168dd6"></div>
<svg class="abs" style="left:68.4px;top:175.5px" width="9" height="9" viewBox="0 0 9 9"><path d="M2.2 1H8V6.3L6.6 8H1V2.4Z" fill="#d4e6f4" stroke="#3a4f5e" stroke-width=".7"/><path d="M1 2.4H6.6V8M6.6 2.4L8 1" fill="none" stroke="#3a4f5e" stroke-width=".5"/><path d="M2.2 4H5.4M2.2 5.4H5.4M2.2 6.8H4.6" stroke="#1f7fc4" stroke-width=".7"/></svg>
<div class="abs" style="left:84.60px;top:176.20px;font-size:6.5px;line-height:7.80px;height:7.80px;color:#fff;white-space:nowrap;transform-origin:0 50%;transform:scaleX(0.9262);font-weight:bold;">[T1] Pocket1</div>
<svg class="abs" style="left:43.1px;top:188.2px" width="7" height="9" viewBox="0 0 7 9"><path d="M1 .8L6 4.5 1 8.2Z" fill="#fff" stroke="#333" stroke-width=".9" stroke-linejoin="round"/></svg>
<svg class="abs" style="left:54.2px;top:189.2px;opacity:0.22" width="10" height="7" viewBox="0 0 10 7"><path d="M.4 3.5Q5 -1.6 9.6 3.5 5 8.6 .4 3.5Z" fill="#c2c2c2" stroke="#9a9a9a" stroke-width=".6"/><circle cx="5" cy="3.5" r="1.7" fill="#858585"/></svg>
<div class="abs" style="left:67.2px;top:187.35px;width:57.599999999999994px;height:10.3px;background:#168dd6"></div>
<svg class="abs" style="left:68.4px;top:188.1px" width="9" height="9" viewBox="0 0 9 9"><path d="M2.2 1H8V6.3L6.6 8H1V2.4Z" fill="#d4e6f4" stroke="#3a4f5e" stroke-width=".7"/><path d="M1 2.4H6.6V8M6.6 2.4L8 1" fill="none" stroke="#3a4f5e" stroke-width=".5"/><path d="M2.2 4H5.4M2.2 5.4H5.4M2.2 6.8H4.6" stroke="#1f7fc4" stroke-width=".7"/></svg>
<div class="abs" style="left:84.60px;top:188.80px;font-size:6.5px;line-height:7.80px;height:7.80px;color:#fff;white-space:nowrap;transform-origin:0 50%;transform:scaleX(0.9314);font-weight:bold;">[T2] Pocket2</div>
<svg class="abs" style="left:43.1px;top:200.8px" width="7" height="9" viewBox="0 0 7 9"><path d="M1 .8L6 4.5 1 8.2Z" fill="#fff" stroke="#333" stroke-width=".9" stroke-linejoin="round"/></svg>
<svg class="abs" style="left:55.2px;top:201.10000000000002px" width="9" height="8.4" viewBox="0 0 10 9"><path d="M5 .5L9.6 8.5H.4Z" fill="#f6c21a" stroke="#8a6a00" stroke-width=".6" stroke-linejoin="round"/><rect x="4.5" y="3" width="1" height="3" fill="#222"/><rect x="4.5" y="6.6" width="1" height="1" fill="#222"/></svg>
<svg class="abs" style="left:67px;top:201.8px;opacity:0.22" width="10" height="7" viewBox="0 0 10 7"><path d="M.4 3.5Q5 -1.6 9.6 3.5 5 8.6 .4 3.5Z" fill="#c2c2c2" stroke="#9a9a9a" stroke-width=".6"/><circle cx="5" cy="3.5" r="1.7" fill="#858585"/></svg>
<div class="abs" style="left:80.2px;top:199.95000000000002px;width:70.99999999999999px;height:10.3px;background:#168dd6"></div>
<svg class="abs" style="left:81.4px;top:200.9px" width="9" height="8" viewBox="0 0 9 8"><path d="M4.5 .6L8.2 3 4.5 5.4 .8 3Z" fill="#fff"/><path d="M1 4.2L4.5 6.6 8 4.2" fill="none" stroke="#55aee8" stroke-width=".9"/></svg>
<div class="abs" style="left:98.00px;top:201.40px;font-size:6.5px;line-height:7.80px;height:7.80px;color:#fff;white-space:nowrap;transform-origin:0 50%;transform:scaleX(0.9161);font-weight:bold;">[T2] 2D Contour2</div>
<svg class="abs" style="left:43.1px;top:213.5px" width="7" height="9" viewBox="0 0 7 9"><path d="M1 .8L6 4.5 1 8.2Z" fill="#fff" stroke="#333" stroke-width=".9" stroke-linejoin="round"/></svg>
<svg class="abs" style="left:54.2px;top:214.5px;opacity:0.22" width="10" height="7" viewBox="0 0 10 7"><path d="M.4 3.5Q5 -1.6 9.6 3.5 5 8.6 .4 3.5Z" fill="#c2c2c2" stroke="#9a9a9a" stroke-width=".6"/><circle cx="5" cy="3.5" r="1.7" fill="#858585"/></svg>
<div class="abs" style="left:67.2px;top:212.65px;width:70.7px;height:10.3px;background:#168dd6"></div>
<svg class="abs" style="left:68.4px;top:213.6px" width="9" height="8" viewBox="0 0 9 8"><path d="M4.5 .6L8.2 3 4.5 5.4 .8 3Z" fill="#fff"/><path d="M1 4.2L4.5 6.6 8 4.2" fill="none" stroke="#55aee8" stroke-width=".9"/></svg>
<div class="abs" style="left:84.60px;top:214.10px;font-size:6.5px;line-height:7.80px;height:7.80px;color:#fff;white-space:nowrap;transform-origin:0 50%;transform:scaleX(0.9161);font-weight:bold;">[T2] 2D Contour3</div>
<svg class="abs" style="left:43.1px;top:226.5px" width="7" height="9" viewBox="0 0 7 9"><path d="M1 .8L6 4.5 1 8.2Z" fill="#fff" stroke="#333" stroke-width=".9" stroke-linejoin="round"/></svg>
<svg class="abs" style="left:54.2px;top:227.5px;opacity:0.22" width="10" height="7" viewBox="0 0 10 7"><path d="M.4 3.5Q5 -1.6 9.6 3.5 5 8.6 .4 3.5Z" fill="#c2c2c2" stroke="#9a9a9a" stroke-width=".6"/><circle cx="5" cy="3.5" r="1.7" fill="#858585"/></svg>
<div class="abs" style="left:80.2px;top:225.5px;width:50.8px;height:11px;background:rgba(242,242,242,.9)"></div>
<svg class="abs" style="left:67.9px;top:226.7px" width="10" height="9" viewBox="0 0 10 9"><path d="M5 .8L9.2 3.4 5 6 .8 3.4Z" fill="#fff" stroke="#3a9be0" stroke-width=".8"/><path d="M.8 4.6L5 7.4 9.2 4.6" fill="none" stroke="#3a9be0" stroke-width="1.3"/></svg>
<div class="abs" style="left:84.60px;top:227.16px;font-size:6.4px;line-height:7.68px;height:7.68px;color:#666;white-space:nowrap;transform-origin:0 50%;transform:scaleX(0.8678);">[T2] 2D Contour4</div>
<div class="abs" style="left:6px;top:622.2px;width:159px;height:14px;background:#f1f1f1;border:1px solid #dedede"></div><div class="abs" style="left:19.60px;top:625.12px;font-size:6.3px;line-height:7.56px;height:7.56px;color:#5a5a5a;white-space:nowrap;transform-origin:0 50%;transform:scaleX(0.8136);">COMMENTS</div><div class="abs" style="left:153.6px;top:626.4px;width:5px;height:5px;border-radius:50%;background:#2a2a2a"></div><div class="abs" style="left:155.2px;top:628.5px;width:1.8px;height:.9px;background:#ddd"></div><div class="abs" style="left:155.7px;top:628px;width:.9px;height:1.9px;background:#ddd"></div><div class="abs" style="left:162.2px;top:624.5px;width:1px;height:9px;background:#9a9a9a"></div><div class="abs" style="left:421px;top:622.6px;width:177px;height:14px;background:rgba(243,243,243,.85)"></div><svg class="abs" style="left:426px;top:624.4px" width="10" height="10" viewBox="0 0 10 10"><ellipse cx="5" cy="5" rx="4.4" ry="1.8" fill="none" stroke="#777" stroke-width=".8"/><ellipse cx="5" cy="5" rx="1.8" ry="4.4" fill="none" stroke="#777" stroke-width=".8"/><path d="M5 2.4L7.4 5 5 7.6 2.6 5Z" fill="#e0a23a"/></svg><svg class="abs" style="left:438.5px;top:628px" width="3.6" height="2.8" viewBox="0 0 3.6 2.8"><path d="M.1 .2H3.5L1.8 2.7Z" fill="#262626"/></svg><svg class="abs" style="left:444px;top:624.8px" width="10" height="9" viewBox="0 0 10 9"><rect x=".8" y="2" width="8.4" height="6.2" rx="1" fill="#e9e9e9" stroke="#555" stroke-width=".8"/><rect x="2.6" y="3.8" width="4.8" height="2.6" fill="#9aa" stroke="#555" stroke-width=".5"/><rect x="3.4" y=".6" width="3.2" height="1.4" fill="#777"/></svg><svg class="abs" style="left:458px;top:624.2px" width="10" height="10.4" viewBox="0 0 10 10.4"><path d="M2.6 9.6L1 5.6Q.8 4.6 1.8 4.8L3 6V2Q3.6 1 4.2 2V1.2Q4.8 .2 5.4 1.2V1.6Q6 .8 6.6 1.8V2.6Q7.4 2 7.8 3V7L7 9.6Z" fill="#f4f4f4" stroke="#444" stroke-width=".7" stroke-linejoin="round"/></svg><svg class="abs" style="left:471px;top:624.4px" width="10" height="10" viewBox="0 0 10 10"><circle cx="4" cy="4" r="2.9" fill="#eef4f8" stroke="#555" stroke-width=".9"/><path d="M6.2 6.2L9 9" stroke="#555" stroke-width="1.3"/><path d="M7.4 .8V3.4M6.1 2.1H8.7" stroke="#333" stroke-width=".7"/></svg><svg class="abs" style="left:485.6px;top:624.2px" width="10.4" height="10.4" viewBox="0 0 10.4 10.4"><circle cx="4.4" cy="4.4" r="3.4" fill="#eef4f8" stroke="#555" stroke-width=".9"/><path d="M7 7L9.8 9.8" stroke="#555" stroke-width="1.4"/></svg><svg class="abs" style="left:497.8px;top:628px" width="3.6" height="2.8" viewBox="0 0 3.6 2.8"><path d="M.1 .2H3.5L1.8 2.7Z" fill="#262626"/></svg><svg class="abs" style="left:507.6px;top:624.4px" width="10.4" height="10" viewBox="0 0 10.4 10"><rect x=".6" y=".8" width="9.2" height="6.2" fill="#6f95bf" stroke="#47627f" stroke-width=".8"/><rect x="1.6" y="1.8" width="7.2" height="2" fill="#a9c3de"/><path d="M4 7V8.6H2.6V9.4H7.8V8.6H6.4V7Z" fill="#666"/></svg><svg class="abs" style="left:518.5px;top:628px" width="3.6" height="2.8" viewBox="0 0 3.6 2.8"><path d="M.1 .2H3.5L1.8 2.7Z" fill="#262626"/></svg><svg class="abs" style="left:523.6px;top:624.6px" width="9.6" height="9.4" viewBox="0 0 9.6 9.4"><rect x=".5" y=".5" width="8.6" height="8.4" fill="#9f9f9f" stroke="#666" stroke-width=".7"/><path d="M3.4 .5V8.9M6.2 .5V8.9M.5 3.3H9.1M.5 6.1H9.1" stroke="#c9c9c9" stroke-width=".5"/></svg><svg class="abs" style="left:534.6px;top:628px" width="3.6" height="2.8" viewBox="0 0 3.6 2.8"><path d="M.1 .2H3.5L1.8 2.7Z" fill="#262626"/></svg><svg class="abs" style="left:543.4px;top:624.2px" width="10.4" height="10.4" viewBox="0 0 10.4 10.4"><rect x="2.6" y=".8" width="7" height="6" fill="#dfe7ef" stroke="#555" stroke-width=".8"/><rect x=".8" y="3" width="7" height="6.4" fill="#8fb2d6" stroke="#47627f" stroke-width=".8"/><path d="M.8 5.2H7.8" stroke="#47627f" stroke-width=".6"/></svg><svg class="abs" style="left:555.4000000000001px;top:628px" width="3.6" height="2.8" viewBox="0 0 3.6 2.8"><path d="M.1 .2H3.5L1.8 2.7Z" fill="#262626"/></svg><svg class="abs" style="left:560.2px;top:625px" width="10.6" height="8.6" viewBox="0 0 10.6 8.6"><rect x="1.2" y="1.4" width="8.2" height="5.6" fill="#5a8cc2" stroke="#3c5f86" stroke-width=".8"/><rect x="0" y="2.6" width="1.6" height="3.2" fill="#3c5f86"/><rect x="9" y="2.6" width="1.6" height="3.2" fill="#3c5f86"/><path d="M2 2.6H8.6" stroke="#a9c8e6" stroke-width=".8"/></svg><svg class="abs" style="left:571.4000000000001px;top:628px" width="3.6" height="2.8" viewBox="0 0 3.6 2.8"><path d="M.1 .2H3.5L1.8 2.7Z" fill="#262626"/></svg><svg class="abs" style="left:577px;top:624.2px" width="10.4" height="10.4" viewBox="0 0 10.4 10.4"><path d="M8.6 3.4A4 4 0 0 0 1.4 4" fill="none" stroke="#2f86d0" stroke-width="1.4"/><path d="M1.6 7A4 4 0 0 0 8.8 6.4" fill="none" stroke="#2f86d0" stroke-width="1.4"/><path d="M9.8 1.4V4.6H6.6Z" fill="#2f86d0"/><path d="M.6 9V5.8H3.8Z" fill="#2f86d0"/></svg><svg class="abs" style="left:588.6px;top:628px" width="3.6" height="2.8" viewBox="0 0 3.6 2.8"><path d="M.1 .2H3.5L1.8 2.7Z" fill="#262626"/></svg><div class="abs" style="left:911.00px;top:599.80px;font-size:18.5px;line-height:22.20px;height:22.20px;color:#000;white-space:nowrap;transform-origin:0 50%;transform:scaleX(0.9945);">superf2c.pl</div><div class="abs" style="left:945.00px;top:625.52px;font-size:6.3px;line-height:7.56px;height:7.56px;color:#444;white-space:nowrap;transform-origin:0 50%;transform:scaleX(0.9829);font-weight:bold;">Multiple selections</div>
<svg class="abs" style="left:955px;top:84px" width="62" height="64" viewBox="955 84 62 64">
<path d="M967.7 102.3L984.5 95.2 1004.8 103.5 986.5 112.5Z" fill="rgba(244,244,244,.6)" stroke="#a2a2a2" stroke-width=".8" stroke-linejoin="round"/>
<path d="M967.7 102.3L986.5 112.5V134.3L969.2 123.6Z" fill="rgba(240,240,240,.6)" stroke="#a2a2a2" stroke-width=".8" stroke-linejoin="round"/>
<path d="M986.5 112.5L1004.8 103.5 1004 124.7 986.5 134.3Z" fill="rgba(226,226,226,.6)" stroke="#a2a2a2" stroke-width=".8" stroke-linejoin="round"/>
<text transform="matrix(.9 .38 -.72 .33 985.6 106.6)" font-size="5.4" fill="#9a9a9a" text-anchor="middle" font-family="Liberation Sans,sans-serif">TOP</text>
<text transform="matrix(.86 .5 0 1 977.4 121.4)" font-size="5" fill="#8a8a8a" text-anchor="middle" font-family="Liberation Sans,sans-serif">FRONT</text>
<text transform="matrix(.86 -.46 0 1 995.4 120.4)" font-size="5" fill="#8a8a8a" text-anchor="middle" font-family="Liberation Sans,sans-serif">RIGHT</text>
<path d="M966.2 100L969 124" stroke="#8585f2" stroke-width="1.2"/>
<path d="M969 124L988 137" stroke="#f07a7a" stroke-width="1.3"/>
<text x="965.6" y="97.6" font-size="7" font-weight="bold" fill="#8080f0" text-anchor="middle" font-family="Liberation Sans,sans-serif">Z</text>
<text x="992" y="142.6" font-size="7" font-weight="bold" fill="#f07a7a" text-anchor="middle" font-family="Liberation Sans,sans-serif">X</text>
</svg>
<svg class="abs" style="left:37.4px;top:371.2px" width="8" height="10" viewBox="0 0 8 10"><path d="M.8 .8V8.2L2.8 6.8 3.8 9 4.8 8.6 3.9 6.5 7.4 6.4Z" fill="#fff" stroke="#6a6a6a" stroke-width=".7" stroke-linejoin="round"/></svg>
</body></html>
